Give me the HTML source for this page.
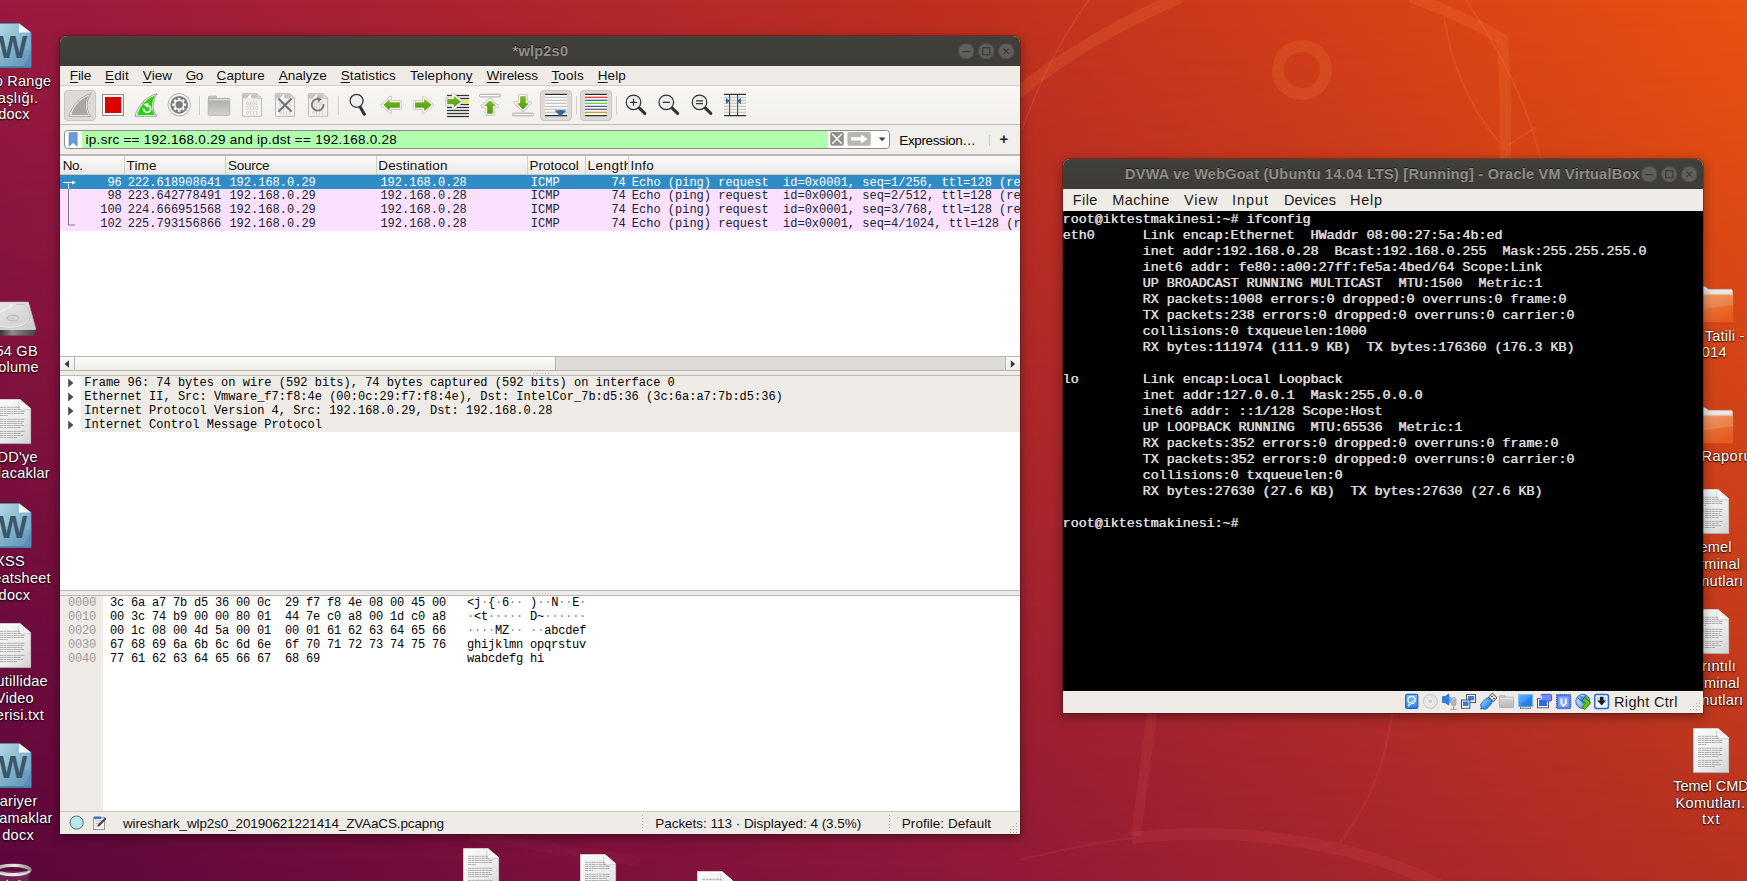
<!DOCTYPE html>
<html><head><meta charset="utf-8"><title>desktop</title>
<style>
html,body{margin:0;padding:0}
body{width:1747px;height:881px;overflow:hidden;position:relative;font-family:"Liberation Sans",sans-serif;font-size:13.5px;color:#000;background:#8c1a3a}
.t{position:absolute;white-space:pre;line-height:20px;height:20px}
.a{position:absolute}
.win{position:absolute;border-radius:7px 7px 0 0;box-shadow:0 0 0 1px rgba(40,20,20,.30),0 3px 11px 1px rgba(0,0,0,.36)}
.tb{position:absolute;left:0;top:0;right:0;height:30px;border-radius:7px 7px 0 0;background:linear-gradient(#45443f 0,#403f3a 2px,#3d3c38 100%)}
.wb{position:absolute;top:7px;width:16px;height:16px;border-radius:8px;background:#5f5e58}

.pr{font-family:"Liberation Mono",monospace;font-size:12px;line-height:14px;white-space:pre;overflow:hidden}
.c{position:absolute;top:0;height:14px;overflow:hidden;box-sizing:border-box;white-space:pre}
.bx .c{overflow:visible}
.bx i{font-style:normal;color:#8a8a8a}
u{text-decoration:underline;text-decoration-thickness:1px;text-underline-offset:1.5px}

.term{font-family:"Liberation Mono",monospace;font-size:13.333px;font-weight:400;color:#dadada;white-space:pre;text-shadow:.55px 0 0 #dadada}
.tl{height:16px;line-height:16px;position:relative;top:1px}
</style></head>
<body>
<svg class=a style="left:0;top:0" width="1747" height="881" viewBox="0 0 1747 881">
<defs>
<linearGradient id="gt" x1="0" y1="0" x2="1" y2="0"><stop offset="0" stop-color="#9a1a40"/><stop offset=".55" stop-color="#c0301f"/><stop offset="1" stop-color="#e95210"/></linearGradient>
<linearGradient id="gb" x1="0" y1="0" x2="1" y2="0"><stop offset="0" stop-color="#5b063c"/><stop offset=".5" stop-color="#8a153c"/><stop offset="1" stop-color="#b83220"/></linearGradient>
<linearGradient id="gm" x1="0" y1="0" x2="0" y2="1"><stop offset="0" stop-color="#000"/><stop offset="1" stop-color="#fff"/></linearGradient>
<mask id="mk"><rect width="1747" height="881" fill="url(#gm)"/></mask>
</defs>
<rect width="1747" height="881" fill="url(#gt)"/>
<rect width="1747" height="881" fill="url(#gb)" mask="url(#mk)"/>
<g fill="none" stroke="#ff8c4a" stroke-opacity=".16">
<circle cx="1302" cy="70" r="24" stroke-width="12"/>
<path d="M1018 93 C1060 58 1115 26 1180 -3" stroke-width="12"/>
<path d="M1022 130 C1040 80 1060 40 1090 -2" stroke-width="1.6"/>
<path d="M1507 146 L1536 127" stroke-width="2"/>
<path d="M1411 -3 C1445 10 1478 24 1502 39 C1506 80 1506 120 1505 160" stroke-width="11.5"/>
<path d="M1444 17 C1452 70 1472 110 1499 142" stroke-width="2"/>
<path d="M1465 -2 C1500 50 1528 105 1541 160" stroke-width="2"/>
</g><g fill="none" stroke="#ff6a70" stroke-opacity=".10">
<path d="M1132 838 C1230 826 1350 840 1440 885" stroke-width="12"/>
<path d="M1152 713 L1136 836" stroke-width="10"/>
<path d="M1392 713 C1385 770 1365 810 1340 842" stroke-width="2.5"/>
<path d="M1020 860 C1060 850 1100 842 1134 838" stroke-width="2"/>
<path d="M470 836 C520 845 580 850 640 862" stroke-width="10" stroke-opacity=".05"/>
</g>
</svg>
<div id="desk">
<svg width="0" height="0" style="position:absolute"><defs>
<linearGradient id="wpg" x1="0" y1="0" x2="1" y2="1"><stop offset="0" stop-color="#acd6e0"/><stop offset=".5" stop-color="#7fb2cb"/><stop offset="1" stop-color="#5f8fb8"/></linearGradient>
<linearGradient id="fold" x1="0" y1="1" x2="1" y2="0"><stop offset="0" stop-color="#fff"/><stop offset=".5" stop-color="#eee"/><stop offset="1" stop-color="#b9b9b9"/></linearGradient>
<linearGradient id="txg" x1="0" y1="0" x2="1" y2="1"><stop offset="0" stop-color="#fbfbfb"/><stop offset=".6" stop-color="#ececec"/><stop offset="1" stop-color="#d2d2d2"/></linearGradient>
<linearGradient id="fog" x1="0" y1="0" x2=".6" y2="1"><stop offset="0" stop-color="#ee9a5c"/><stop offset=".5" stop-color="#e9763a"/><stop offset="1" stop-color="#e65a20"/></linearGradient>
<linearGradient id="fbk" x1="0" y1="0" x2="0" y2="1"><stop offset="0" stop-color="#f6f6f6"/><stop offset="1" stop-color="#d4d4d4"/></linearGradient>
<linearGradient id="hdg" x1="0" y1="0" x2="1" y2="1"><stop offset="0" stop-color="#e9e9e9"/><stop offset="1" stop-color="#cdcdcd"/></linearGradient>
<linearGradient id="hdf" x1="0" y1="0" x2="1" y2="0"><stop offset="0" stop-color="#6a6a6a"/><stop offset=".22" stop-color="#2c2c2c"/><stop offset=".5" stop-color="#8c8c8c"/><stop offset="1" stop-color="#444"/></linearGradient>
<linearGradient id="trg" x1="0" y1="0" x2="1" y2="0"><stop offset="0" stop-color="#a4a6a0"/><stop offset=".55" stop-color="#e8e8e6"/><stop offset="1" stop-color="#8c8e88"/></linearGradient>
</defs></svg>
<svg class=a style="left:-4.5px;top:23px;" width="37" height="46" viewBox="0 0 37 46"><path d='M.5 .5H23L35 9.6V44.5H.5Z' fill='url(#wpg)' stroke='#4f8fae' stroke-width='1'/><path d='M1 44H35' stroke='#2f6f8c' stroke-width='1.2'/><path d='M34.5 44.5V31L27 44.5Z' fill='#5a86b9' opacity='.75'/><path d='M1 30L14 22L35 28V12L23 1H1Z' fill='#fff' opacity='.10'/><path d='M23 .5V9.6H35Z' fill='url(#fold)'/><text x='16.8' y='35.4' font-family='Liberation Sans, sans-serif' font-weight='700' font-size='30.5' text-anchor='middle' fill='#3c5666'>W</text></svg>
<svg class=a style="left:-4.5px;top:503px;" width="37" height="46" viewBox="0 0 37 46"><path d='M.5 .5H23L35 9.6V44.5H.5Z' fill='url(#wpg)' stroke='#4f8fae' stroke-width='1'/><path d='M1 44H35' stroke='#2f6f8c' stroke-width='1.2'/><path d='M34.5 44.5V31L27 44.5Z' fill='#5a86b9' opacity='.75'/><path d='M1 30L14 22L35 28V12L23 1H1Z' fill='#fff' opacity='.10'/><path d='M23 .5V9.6H35Z' fill='url(#fold)'/><text x='16.8' y='35.4' font-family='Liberation Sans, sans-serif' font-weight='700' font-size='30.5' text-anchor='middle' fill='#3c5666'>W</text></svg>
<svg class=a style="left:-4.5px;top:743px;" width="37" height="46" viewBox="0 0 37 46"><path d='M.5 .5H23L35 9.6V44.5H.5Z' fill='url(#wpg)' stroke='#4f8fae' stroke-width='1'/><path d='M1 44H35' stroke='#2f6f8c' stroke-width='1.2'/><path d='M34.5 44.5V31L27 44.5Z' fill='#5a86b9' opacity='.75'/><path d='M1 30L14 22L35 28V12L23 1H1Z' fill='#fff' opacity='.10'/><path d='M23 .5V9.6H35Z' fill='url(#fold)'/><text x='16.8' y='35.4' font-family='Liberation Sans, sans-serif' font-weight='700' font-size='30.5' text-anchor='middle' fill='#3c5666'>W</text></svg>
<svg class=a style="left:-4.8px;top:398.5px;" width="37" height="46" viewBox="0 0 37 46"><path d='M.5 .5H25L35.6 9.6V44.5H.5Z' fill='url(#txg)' stroke='#c9c9c9' stroke-width='.9'/><path d='M1.3 44V1.3H24.5' stroke='#fff' stroke-opacity='.9' stroke-width='.8' fill='none'/><path d='M.5 44.6H35.6' stroke='#a5a5a5' stroke-width='.9'/><path d='M5 8.3H25' stroke='#8c8c8c' stroke-opacity='.8' stroke-width='.85' stroke-dasharray='3.2 .5 2.6 .5 4 .5 1.8 .5'/><path d='M5 10.4H26' stroke='#8c8c8c' stroke-opacity='.8' stroke-width='.85' stroke-dasharray='3.2 .5 2.6 .5 4 .5 1.8 .5'/><path d='M5 12.4H30' stroke='#8c8c8c' stroke-opacity='.8' stroke-width='.85' stroke-dasharray='3.2 .5 2.6 .5 4 .5 1.8 .5'/><path d='M5 14.5H29' stroke='#8c8c8c' stroke-opacity='.8' stroke-width='.85' stroke-dasharray='3.2 .5 2.6 .5 4 .5 1.8 .5'/><path d='M5 16.5H13' stroke='#8c8c8c' stroke-opacity='.8' stroke-width='.85' stroke-dasharray='3.2 .5 2.6 .5 4 .5 1.8 .5'/><path d='M5 20.3H30' stroke='#8c8c8c' stroke-opacity='.8' stroke-width='.85' stroke-dasharray='3.2 .5 2.6 .5 4 .5 1.8 .5'/><path d='M5 22.4H29' stroke='#8c8c8c' stroke-opacity='.8' stroke-width='.85' stroke-dasharray='3.2 .5 2.6 .5 4 .5 1.8 .5'/><path d='M5 24.5H27' stroke='#8c8c8c' stroke-opacity='.8' stroke-width='.85' stroke-dasharray='3.2 .5 2.6 .5 4 .5 1.8 .5'/><path d='M5 26.5H29' stroke='#8c8c8c' stroke-opacity='.8' stroke-width='.85' stroke-dasharray='3.2 .5 2.6 .5 4 .5 1.8 .5'/><path d='M5 28.6H26' stroke='#8c8c8c' stroke-opacity='.8' stroke-width='.85' stroke-dasharray='3.2 .5 2.6 .5 4 .5 1.8 .5'/><path d='M5 32.4H30' stroke='#8c8c8c' stroke-opacity='.8' stroke-width='.85' stroke-dasharray='3.2 .5 2.6 .5 4 .5 1.8 .5'/><path d='M5 34.4H26' stroke='#8c8c8c' stroke-opacity='.8' stroke-width='.85' stroke-dasharray='3.2 .5 2.6 .5 4 .5 1.8 .5'/><path d='M5 36.5H28' stroke='#8c8c8c' stroke-opacity='.8' stroke-width='.85' stroke-dasharray='3.2 .5 2.6 .5 4 .5 1.8 .5'/><path d='M5 38.5H22' stroke='#8c8c8c' stroke-opacity='.8' stroke-width='.85' stroke-dasharray='3.2 .5 2.6 .5 4 .5 1.8 .5'/><path d='M25 .5V6Q25 9.6 28.5 9.6H35.6Z' fill='url(#fold)'/><path d='M23.6 2.5V9Q24 10.6 26 10.8L35 10.6' stroke='#000' stroke-opacity='.10' stroke-width='1.2' fill='none'/></svg>
<svg class=a style="left:-4.8px;top:623px;" width="37" height="46" viewBox="0 0 37 46"><path d='M.5 .5H25L35.6 9.6V44.5H.5Z' fill='url(#txg)' stroke='#c9c9c9' stroke-width='.9'/><path d='M1.3 44V1.3H24.5' stroke='#fff' stroke-opacity='.9' stroke-width='.8' fill='none'/><path d='M.5 44.6H35.6' stroke='#a5a5a5' stroke-width='.9'/><path d='M5 8.3H25' stroke='#8c8c8c' stroke-opacity='.8' stroke-width='.85' stroke-dasharray='3.2 .5 2.6 .5 4 .5 1.8 .5'/><path d='M5 10.4H26' stroke='#8c8c8c' stroke-opacity='.8' stroke-width='.85' stroke-dasharray='3.2 .5 2.6 .5 4 .5 1.8 .5'/><path d='M5 12.4H30' stroke='#8c8c8c' stroke-opacity='.8' stroke-width='.85' stroke-dasharray='3.2 .5 2.6 .5 4 .5 1.8 .5'/><path d='M5 14.5H29' stroke='#8c8c8c' stroke-opacity='.8' stroke-width='.85' stroke-dasharray='3.2 .5 2.6 .5 4 .5 1.8 .5'/><path d='M5 16.5H13' stroke='#8c8c8c' stroke-opacity='.8' stroke-width='.85' stroke-dasharray='3.2 .5 2.6 .5 4 .5 1.8 .5'/><path d='M5 20.3H30' stroke='#8c8c8c' stroke-opacity='.8' stroke-width='.85' stroke-dasharray='3.2 .5 2.6 .5 4 .5 1.8 .5'/><path d='M5 22.4H29' stroke='#8c8c8c' stroke-opacity='.8' stroke-width='.85' stroke-dasharray='3.2 .5 2.6 .5 4 .5 1.8 .5'/><path d='M5 24.5H27' stroke='#8c8c8c' stroke-opacity='.8' stroke-width='.85' stroke-dasharray='3.2 .5 2.6 .5 4 .5 1.8 .5'/><path d='M5 26.5H29' stroke='#8c8c8c' stroke-opacity='.8' stroke-width='.85' stroke-dasharray='3.2 .5 2.6 .5 4 .5 1.8 .5'/><path d='M5 28.6H26' stroke='#8c8c8c' stroke-opacity='.8' stroke-width='.85' stroke-dasharray='3.2 .5 2.6 .5 4 .5 1.8 .5'/><path d='M5 32.4H30' stroke='#8c8c8c' stroke-opacity='.8' stroke-width='.85' stroke-dasharray='3.2 .5 2.6 .5 4 .5 1.8 .5'/><path d='M5 34.4H26' stroke='#8c8c8c' stroke-opacity='.8' stroke-width='.85' stroke-dasharray='3.2 .5 2.6 .5 4 .5 1.8 .5'/><path d='M5 36.5H28' stroke='#8c8c8c' stroke-opacity='.8' stroke-width='.85' stroke-dasharray='3.2 .5 2.6 .5 4 .5 1.8 .5'/><path d='M5 38.5H22' stroke='#8c8c8c' stroke-opacity='.8' stroke-width='.85' stroke-dasharray='3.2 .5 2.6 .5 4 .5 1.8 .5'/><path d='M25 .5V6Q25 9.6 28.5 9.6H35.6Z' fill='url(#fold)'/><path d='M23.6 2.5V9Q24 10.6 26 10.8L35 10.6' stroke='#000' stroke-opacity='.10' stroke-width='1.2' fill='none'/></svg>
<svg class=a style="left:-12px;top:300px;" width="50" height="38" viewBox="0 0 50 38"><path d='M.2 29L7.6 2.1H40.4L47.8 29Z' fill='url(#hdg)' stroke='#bdbdbd' stroke-width='.7'/><path d='M.2 29H47.8L46.9 35.6H1.1Z' fill='url(#hdf)'/><path d='M.4 29.2H47.6' stroke='#f2f2f2' stroke-width='1.1'/><path d='M28 4.5H36.5C41 9 43.5 14 41.5 19C38.5 25.5 30 28 22 28C14 28 6 26 3 22' fill='none' stroke='#bcbcbc' stroke-width='.8'/><path d='M3.5 21.4C8 26 16 27.2 22 27.2C30 27.2 37.5 25 40.6 19' fill='none' stroke='#f4f4f4' stroke-width='.9'/><ellipse cx='25' cy='18' rx='6' ry='2.8' fill='#d4d4d4' stroke='#a9a9a9' stroke-width='.7'/><path d='M8 14L24 5.5' stroke='#eeeeee' stroke-width='2' stroke-linecap='round'/></svg>
<svg class=a style="left:-6px;top:862px;" width="40" height="20" viewBox="0 0 40 20"><path d='M2.5 9L4 20H34L35.6 9Z' fill='#fff' fill-opacity='.12'/><ellipse cx='19' cy='8' rx='17' ry='4.6' fill='none' stroke='url(#trg)' stroke-width='3.4'/><path d='M2 9.4Q19 17.5 36 9.4' fill='none' stroke='#f2f2f2' stroke-opacity='.8' stroke-width='1.2'/><path d='M11 20L13.5 17.6L15 20ZM23.5 20L24.5 18L29 19.4V20Z' fill='#fff' fill-opacity='.85'/></svg>
<svg class=a style="left:1686px;top:286px;" width="48" height="38" viewBox="0 0 48 38"><path d='M1 3Q1 .6 3 .6H17.5Q19 .6 20 1.6L22.5 3.4H45Q46.4 3.4 46.4 5V12H1Z' fill='url(#fbk)' stroke='#cfcfcf' stroke-width='.6'/><rect x='.6' y='8' width='46.6' height='28.6' rx='1.6' fill='url(#fog)'/><path d='M.6 9.6Q.6 8 2.2 8H45.6Q47.2 8 47.2 9.6V19C30 21 14 24 .6 27Z' fill='#fff' fill-opacity='.13'/><path d='M1 8.6H46.8' stroke='#f7c09a' stroke-width='.9'/><path d='M1.5 36.9H46.4' stroke='#b8431a' stroke-opacity='.6' stroke-width='.9'/></svg>
<svg class=a style="left:1686px;top:407px;" width="48" height="38" viewBox="0 0 48 38"><path d='M1 3Q1 .6 3 .6H17.5Q19 .6 20 1.6L22.5 3.4H45Q46.4 3.4 46.4 5V12H1Z' fill='url(#fbk)' stroke='#cfcfcf' stroke-width='.6'/><rect x='.6' y='8' width='46.6' height='28.6' rx='1.6' fill='url(#fog)'/><path d='M.6 9.6Q.6 8 2.2 8H45.6Q47.2 8 47.2 9.6V19C30 21 14 24 .6 27Z' fill='#fff' fill-opacity='.13'/><path d='M1 8.6H46.8' stroke='#f7c09a' stroke-width='.9'/><path d='M1.5 36.9H46.4' stroke='#b8431a' stroke-opacity='.6' stroke-width='.9'/></svg>
<svg class=a style="left:1692.5px;top:489px;" width="37" height="46" viewBox="0 0 37 46"><path d='M.5 .5H25L35.6 9.6V44.5H.5Z' fill='url(#txg)' stroke='#c9c9c9' stroke-width='.9'/><path d='M1.3 44V1.3H24.5' stroke='#fff' stroke-opacity='.9' stroke-width='.8' fill='none'/><path d='M.5 44.6H35.6' stroke='#a5a5a5' stroke-width='.9'/><path d='M5 8.3H25' stroke='#8c8c8c' stroke-opacity='.8' stroke-width='.85' stroke-dasharray='3.2 .5 2.6 .5 4 .5 1.8 .5'/><path d='M5 10.4H26' stroke='#8c8c8c' stroke-opacity='.8' stroke-width='.85' stroke-dasharray='3.2 .5 2.6 .5 4 .5 1.8 .5'/><path d='M5 12.4H30' stroke='#8c8c8c' stroke-opacity='.8' stroke-width='.85' stroke-dasharray='3.2 .5 2.6 .5 4 .5 1.8 .5'/><path d='M5 14.5H29' stroke='#8c8c8c' stroke-opacity='.8' stroke-width='.85' stroke-dasharray='3.2 .5 2.6 .5 4 .5 1.8 .5'/><path d='M5 16.5H13' stroke='#8c8c8c' stroke-opacity='.8' stroke-width='.85' stroke-dasharray='3.2 .5 2.6 .5 4 .5 1.8 .5'/><path d='M5 20.3H30' stroke='#8c8c8c' stroke-opacity='.8' stroke-width='.85' stroke-dasharray='3.2 .5 2.6 .5 4 .5 1.8 .5'/><path d='M5 22.4H29' stroke='#8c8c8c' stroke-opacity='.8' stroke-width='.85' stroke-dasharray='3.2 .5 2.6 .5 4 .5 1.8 .5'/><path d='M5 24.5H27' stroke='#8c8c8c' stroke-opacity='.8' stroke-width='.85' stroke-dasharray='3.2 .5 2.6 .5 4 .5 1.8 .5'/><path d='M5 26.5H29' stroke='#8c8c8c' stroke-opacity='.8' stroke-width='.85' stroke-dasharray='3.2 .5 2.6 .5 4 .5 1.8 .5'/><path d='M5 28.6H26' stroke='#8c8c8c' stroke-opacity='.8' stroke-width='.85' stroke-dasharray='3.2 .5 2.6 .5 4 .5 1.8 .5'/><path d='M5 32.4H30' stroke='#8c8c8c' stroke-opacity='.8' stroke-width='.85' stroke-dasharray='3.2 .5 2.6 .5 4 .5 1.8 .5'/><path d='M5 34.4H26' stroke='#8c8c8c' stroke-opacity='.8' stroke-width='.85' stroke-dasharray='3.2 .5 2.6 .5 4 .5 1.8 .5'/><path d='M5 36.5H28' stroke='#8c8c8c' stroke-opacity='.8' stroke-width='.85' stroke-dasharray='3.2 .5 2.6 .5 4 .5 1.8 .5'/><path d='M5 38.5H22' stroke='#8c8c8c' stroke-opacity='.8' stroke-width='.85' stroke-dasharray='3.2 .5 2.6 .5 4 .5 1.8 .5'/><path d='M25 .5V6Q25 9.6 28.5 9.6H35.6Z' fill='url(#fold)'/><path d='M23.6 2.5V9Q24 10.6 26 10.8L35 10.6' stroke='#000' stroke-opacity='.10' stroke-width='1.2' fill='none'/></svg>
<svg class=a style="left:1692.5px;top:608.5px;" width="37" height="46" viewBox="0 0 37 46"><path d='M.5 .5H25L35.6 9.6V44.5H.5Z' fill='url(#txg)' stroke='#c9c9c9' stroke-width='.9'/><path d='M1.3 44V1.3H24.5' stroke='#fff' stroke-opacity='.9' stroke-width='.8' fill='none'/><path d='M.5 44.6H35.6' stroke='#a5a5a5' stroke-width='.9'/><path d='M5 8.3H25' stroke='#8c8c8c' stroke-opacity='.8' stroke-width='.85' stroke-dasharray='3.2 .5 2.6 .5 4 .5 1.8 .5'/><path d='M5 10.4H26' stroke='#8c8c8c' stroke-opacity='.8' stroke-width='.85' stroke-dasharray='3.2 .5 2.6 .5 4 .5 1.8 .5'/><path d='M5 12.4H30' stroke='#8c8c8c' stroke-opacity='.8' stroke-width='.85' stroke-dasharray='3.2 .5 2.6 .5 4 .5 1.8 .5'/><path d='M5 14.5H29' stroke='#8c8c8c' stroke-opacity='.8' stroke-width='.85' stroke-dasharray='3.2 .5 2.6 .5 4 .5 1.8 .5'/><path d='M5 16.5H13' stroke='#8c8c8c' stroke-opacity='.8' stroke-width='.85' stroke-dasharray='3.2 .5 2.6 .5 4 .5 1.8 .5'/><path d='M5 20.3H30' stroke='#8c8c8c' stroke-opacity='.8' stroke-width='.85' stroke-dasharray='3.2 .5 2.6 .5 4 .5 1.8 .5'/><path d='M5 22.4H29' stroke='#8c8c8c' stroke-opacity='.8' stroke-width='.85' stroke-dasharray='3.2 .5 2.6 .5 4 .5 1.8 .5'/><path d='M5 24.5H27' stroke='#8c8c8c' stroke-opacity='.8' stroke-width='.85' stroke-dasharray='3.2 .5 2.6 .5 4 .5 1.8 .5'/><path d='M5 26.5H29' stroke='#8c8c8c' stroke-opacity='.8' stroke-width='.85' stroke-dasharray='3.2 .5 2.6 .5 4 .5 1.8 .5'/><path d='M5 28.6H26' stroke='#8c8c8c' stroke-opacity='.8' stroke-width='.85' stroke-dasharray='3.2 .5 2.6 .5 4 .5 1.8 .5'/><path d='M5 32.4H30' stroke='#8c8c8c' stroke-opacity='.8' stroke-width='.85' stroke-dasharray='3.2 .5 2.6 .5 4 .5 1.8 .5'/><path d='M5 34.4H26' stroke='#8c8c8c' stroke-opacity='.8' stroke-width='.85' stroke-dasharray='3.2 .5 2.6 .5 4 .5 1.8 .5'/><path d='M5 36.5H28' stroke='#8c8c8c' stroke-opacity='.8' stroke-width='.85' stroke-dasharray='3.2 .5 2.6 .5 4 .5 1.8 .5'/><path d='M5 38.5H22' stroke='#8c8c8c' stroke-opacity='.8' stroke-width='.85' stroke-dasharray='3.2 .5 2.6 .5 4 .5 1.8 .5'/><path d='M25 .5V6Q25 9.6 28.5 9.6H35.6Z' fill='url(#fold)'/><path d='M23.6 2.5V9Q24 10.6 26 10.8L35 10.6' stroke='#000' stroke-opacity='.10' stroke-width='1.2' fill='none'/></svg>
<svg class=a style="left:1692.5px;top:728px;" width="37" height="46" viewBox="0 0 37 46"><path d='M.5 .5H25L35.6 9.6V44.5H.5Z' fill='url(#txg)' stroke='#c9c9c9' stroke-width='.9'/><path d='M1.3 44V1.3H24.5' stroke='#fff' stroke-opacity='.9' stroke-width='.8' fill='none'/><path d='M.5 44.6H35.6' stroke='#a5a5a5' stroke-width='.9'/><path d='M5 8.3H25' stroke='#8c8c8c' stroke-opacity='.8' stroke-width='.85' stroke-dasharray='3.2 .5 2.6 .5 4 .5 1.8 .5'/><path d='M5 10.4H26' stroke='#8c8c8c' stroke-opacity='.8' stroke-width='.85' stroke-dasharray='3.2 .5 2.6 .5 4 .5 1.8 .5'/><path d='M5 12.4H30' stroke='#8c8c8c' stroke-opacity='.8' stroke-width='.85' stroke-dasharray='3.2 .5 2.6 .5 4 .5 1.8 .5'/><path d='M5 14.5H29' stroke='#8c8c8c' stroke-opacity='.8' stroke-width='.85' stroke-dasharray='3.2 .5 2.6 .5 4 .5 1.8 .5'/><path d='M5 16.5H13' stroke='#8c8c8c' stroke-opacity='.8' stroke-width='.85' stroke-dasharray='3.2 .5 2.6 .5 4 .5 1.8 .5'/><path d='M5 20.3H30' stroke='#8c8c8c' stroke-opacity='.8' stroke-width='.85' stroke-dasharray='3.2 .5 2.6 .5 4 .5 1.8 .5'/><path d='M5 22.4H29' stroke='#8c8c8c' stroke-opacity='.8' stroke-width='.85' stroke-dasharray='3.2 .5 2.6 .5 4 .5 1.8 .5'/><path d='M5 24.5H27' stroke='#8c8c8c' stroke-opacity='.8' stroke-width='.85' stroke-dasharray='3.2 .5 2.6 .5 4 .5 1.8 .5'/><path d='M5 26.5H29' stroke='#8c8c8c' stroke-opacity='.8' stroke-width='.85' stroke-dasharray='3.2 .5 2.6 .5 4 .5 1.8 .5'/><path d='M5 28.6H26' stroke='#8c8c8c' stroke-opacity='.8' stroke-width='.85' stroke-dasharray='3.2 .5 2.6 .5 4 .5 1.8 .5'/><path d='M5 32.4H30' stroke='#8c8c8c' stroke-opacity='.8' stroke-width='.85' stroke-dasharray='3.2 .5 2.6 .5 4 .5 1.8 .5'/><path d='M5 34.4H26' stroke='#8c8c8c' stroke-opacity='.8' stroke-width='.85' stroke-dasharray='3.2 .5 2.6 .5 4 .5 1.8 .5'/><path d='M5 36.5H28' stroke='#8c8c8c' stroke-opacity='.8' stroke-width='.85' stroke-dasharray='3.2 .5 2.6 .5 4 .5 1.8 .5'/><path d='M5 38.5H22' stroke='#8c8c8c' stroke-opacity='.8' stroke-width='.85' stroke-dasharray='3.2 .5 2.6 .5 4 .5 1.8 .5'/><path d='M25 .5V6Q25 9.6 28.5 9.6H35.6Z' fill='url(#fold)'/><path d='M23.6 2.5V9Q24 10.6 26 10.8L35 10.6' stroke='#000' stroke-opacity='.10' stroke-width='1.2' fill='none'/></svg>
<svg class=a style="left:463px;top:848px;" width="37" height="46" viewBox="0 0 37 46"><path d='M.5 .5H25L35.6 9.6V44.5H.5Z' fill='url(#txg)' stroke='#c9c9c9' stroke-width='.9'/><path d='M1.3 44V1.3H24.5' stroke='#fff' stroke-opacity='.9' stroke-width='.8' fill='none'/><path d='M.5 44.6H35.6' stroke='#a5a5a5' stroke-width='.9'/><path d='M5 8.3H25' stroke='#8c8c8c' stroke-opacity='.8' stroke-width='.85' stroke-dasharray='3.2 .5 2.6 .5 4 .5 1.8 .5'/><path d='M5 10.4H26' stroke='#8c8c8c' stroke-opacity='.8' stroke-width='.85' stroke-dasharray='3.2 .5 2.6 .5 4 .5 1.8 .5'/><path d='M5 12.4H30' stroke='#8c8c8c' stroke-opacity='.8' stroke-width='.85' stroke-dasharray='3.2 .5 2.6 .5 4 .5 1.8 .5'/><path d='M5 14.5H29' stroke='#8c8c8c' stroke-opacity='.8' stroke-width='.85' stroke-dasharray='3.2 .5 2.6 .5 4 .5 1.8 .5'/><path d='M5 16.5H13' stroke='#8c8c8c' stroke-opacity='.8' stroke-width='.85' stroke-dasharray='3.2 .5 2.6 .5 4 .5 1.8 .5'/><path d='M5 20.3H30' stroke='#8c8c8c' stroke-opacity='.8' stroke-width='.85' stroke-dasharray='3.2 .5 2.6 .5 4 .5 1.8 .5'/><path d='M5 22.4H29' stroke='#8c8c8c' stroke-opacity='.8' stroke-width='.85' stroke-dasharray='3.2 .5 2.6 .5 4 .5 1.8 .5'/><path d='M5 24.5H27' stroke='#8c8c8c' stroke-opacity='.8' stroke-width='.85' stroke-dasharray='3.2 .5 2.6 .5 4 .5 1.8 .5'/><path d='M5 26.5H29' stroke='#8c8c8c' stroke-opacity='.8' stroke-width='.85' stroke-dasharray='3.2 .5 2.6 .5 4 .5 1.8 .5'/><path d='M5 28.6H26' stroke='#8c8c8c' stroke-opacity='.8' stroke-width='.85' stroke-dasharray='3.2 .5 2.6 .5 4 .5 1.8 .5'/><path d='M5 32.4H30' stroke='#8c8c8c' stroke-opacity='.8' stroke-width='.85' stroke-dasharray='3.2 .5 2.6 .5 4 .5 1.8 .5'/><path d='M5 34.4H26' stroke='#8c8c8c' stroke-opacity='.8' stroke-width='.85' stroke-dasharray='3.2 .5 2.6 .5 4 .5 1.8 .5'/><path d='M5 36.5H28' stroke='#8c8c8c' stroke-opacity='.8' stroke-width='.85' stroke-dasharray='3.2 .5 2.6 .5 4 .5 1.8 .5'/><path d='M5 38.5H22' stroke='#8c8c8c' stroke-opacity='.8' stroke-width='.85' stroke-dasharray='3.2 .5 2.6 .5 4 .5 1.8 .5'/><path d='M25 .5V6Q25 9.6 28.5 9.6H35.6Z' fill='url(#fold)'/><path d='M23.6 2.5V9Q24 10.6 26 10.8L35 10.6' stroke='#000' stroke-opacity='.10' stroke-width='1.2' fill='none'/></svg>
<svg class=a style="left:580px;top:854px;" width="37" height="46" viewBox="0 0 37 46"><path d='M.5 .5H25L35.6 9.6V44.5H.5Z' fill='url(#txg)' stroke='#c9c9c9' stroke-width='.9'/><path d='M1.3 44V1.3H24.5' stroke='#fff' stroke-opacity='.9' stroke-width='.8' fill='none'/><path d='M.5 44.6H35.6' stroke='#a5a5a5' stroke-width='.9'/><path d='M5 8.3H25' stroke='#8c8c8c' stroke-opacity='.8' stroke-width='.85' stroke-dasharray='3.2 .5 2.6 .5 4 .5 1.8 .5'/><path d='M5 10.4H26' stroke='#8c8c8c' stroke-opacity='.8' stroke-width='.85' stroke-dasharray='3.2 .5 2.6 .5 4 .5 1.8 .5'/><path d='M5 12.4H30' stroke='#8c8c8c' stroke-opacity='.8' stroke-width='.85' stroke-dasharray='3.2 .5 2.6 .5 4 .5 1.8 .5'/><path d='M5 14.5H29' stroke='#8c8c8c' stroke-opacity='.8' stroke-width='.85' stroke-dasharray='3.2 .5 2.6 .5 4 .5 1.8 .5'/><path d='M5 16.5H13' stroke='#8c8c8c' stroke-opacity='.8' stroke-width='.85' stroke-dasharray='3.2 .5 2.6 .5 4 .5 1.8 .5'/><path d='M5 20.3H30' stroke='#8c8c8c' stroke-opacity='.8' stroke-width='.85' stroke-dasharray='3.2 .5 2.6 .5 4 .5 1.8 .5'/><path d='M5 22.4H29' stroke='#8c8c8c' stroke-opacity='.8' stroke-width='.85' stroke-dasharray='3.2 .5 2.6 .5 4 .5 1.8 .5'/><path d='M5 24.5H27' stroke='#8c8c8c' stroke-opacity='.8' stroke-width='.85' stroke-dasharray='3.2 .5 2.6 .5 4 .5 1.8 .5'/><path d='M5 26.5H29' stroke='#8c8c8c' stroke-opacity='.8' stroke-width='.85' stroke-dasharray='3.2 .5 2.6 .5 4 .5 1.8 .5'/><path d='M5 28.6H26' stroke='#8c8c8c' stroke-opacity='.8' stroke-width='.85' stroke-dasharray='3.2 .5 2.6 .5 4 .5 1.8 .5'/><path d='M5 32.4H30' stroke='#8c8c8c' stroke-opacity='.8' stroke-width='.85' stroke-dasharray='3.2 .5 2.6 .5 4 .5 1.8 .5'/><path d='M5 34.4H26' stroke='#8c8c8c' stroke-opacity='.8' stroke-width='.85' stroke-dasharray='3.2 .5 2.6 .5 4 .5 1.8 .5'/><path d='M5 36.5H28' stroke='#8c8c8c' stroke-opacity='.8' stroke-width='.85' stroke-dasharray='3.2 .5 2.6 .5 4 .5 1.8 .5'/><path d='M5 38.5H22' stroke='#8c8c8c' stroke-opacity='.8' stroke-width='.85' stroke-dasharray='3.2 .5 2.6 .5 4 .5 1.8 .5'/><path d='M25 .5V6Q25 9.6 28.5 9.6H35.6Z' fill='url(#fold)'/><path d='M23.6 2.5V9Q24 10.6 26 10.8L35 10.6' stroke='#000' stroke-opacity='.10' stroke-width='1.2' fill='none'/></svg>
<svg class=a style="left:697px;top:871px;" width="37" height="46" viewBox="0 0 37 46"><path d='M.5 .5H25L35.6 9.6V44.5H.5Z' fill='url(#txg)' stroke='#c9c9c9' stroke-width='.9'/><path d='M1.3 44V1.3H24.5' stroke='#fff' stroke-opacity='.9' stroke-width='.8' fill='none'/><path d='M.5 44.6H35.6' stroke='#a5a5a5' stroke-width='.9'/><path d='M5 8.3H25' stroke='#8c8c8c' stroke-opacity='.8' stroke-width='.85' stroke-dasharray='3.2 .5 2.6 .5 4 .5 1.8 .5'/><path d='M5 10.4H26' stroke='#8c8c8c' stroke-opacity='.8' stroke-width='.85' stroke-dasharray='3.2 .5 2.6 .5 4 .5 1.8 .5'/><path d='M5 12.4H30' stroke='#8c8c8c' stroke-opacity='.8' stroke-width='.85' stroke-dasharray='3.2 .5 2.6 .5 4 .5 1.8 .5'/><path d='M5 14.5H29' stroke='#8c8c8c' stroke-opacity='.8' stroke-width='.85' stroke-dasharray='3.2 .5 2.6 .5 4 .5 1.8 .5'/><path d='M5 16.5H13' stroke='#8c8c8c' stroke-opacity='.8' stroke-width='.85' stroke-dasharray='3.2 .5 2.6 .5 4 .5 1.8 .5'/><path d='M5 20.3H30' stroke='#8c8c8c' stroke-opacity='.8' stroke-width='.85' stroke-dasharray='3.2 .5 2.6 .5 4 .5 1.8 .5'/><path d='M5 22.4H29' stroke='#8c8c8c' stroke-opacity='.8' stroke-width='.85' stroke-dasharray='3.2 .5 2.6 .5 4 .5 1.8 .5'/><path d='M5 24.5H27' stroke='#8c8c8c' stroke-opacity='.8' stroke-width='.85' stroke-dasharray='3.2 .5 2.6 .5 4 .5 1.8 .5'/><path d='M5 26.5H29' stroke='#8c8c8c' stroke-opacity='.8' stroke-width='.85' stroke-dasharray='3.2 .5 2.6 .5 4 .5 1.8 .5'/><path d='M5 28.6H26' stroke='#8c8c8c' stroke-opacity='.8' stroke-width='.85' stroke-dasharray='3.2 .5 2.6 .5 4 .5 1.8 .5'/><path d='M5 32.4H30' stroke='#8c8c8c' stroke-opacity='.8' stroke-width='.85' stroke-dasharray='3.2 .5 2.6 .5 4 .5 1.8 .5'/><path d='M5 34.4H26' stroke='#8c8c8c' stroke-opacity='.8' stroke-width='.85' stroke-dasharray='3.2 .5 2.6 .5 4 .5 1.8 .5'/><path d='M5 36.5H28' stroke='#8c8c8c' stroke-opacity='.8' stroke-width='.85' stroke-dasharray='3.2 .5 2.6 .5 4 .5 1.8 .5'/><path d='M5 38.5H22' stroke='#8c8c8c' stroke-opacity='.8' stroke-width='.85' stroke-dasharray='3.2 .5 2.6 .5 4 .5 1.8 .5'/><path d='M25 .5V6Q25 9.6 28.5 9.6H35.6Z' fill='url(#fold)'/><path d='M23.6 2.5V9Q24 10.6 26 10.8L35 10.6' stroke='#000' stroke-opacity='.10' stroke-width='1.2' fill='none'/></svg>
<span class=t style="left:0.0px;top:71px;font-size:14.5px;letter-spacing:0.250px;color:#fff;left:auto;right:1695.7px;text-shadow:0 1px 1.5px rgba(0,0,0,.95),0 0 2px rgba(0,0,0,.6);">Nmap Range</span>
<span class=t style="left:0.0px;top:88px;font-size:14.5px;letter-spacing:0.250px;color:#fff;left:auto;right:1708.7px;text-shadow:0 1px 1.5px rgba(0,0,0,.95),0 0 2px rgba(0,0,0,.6);">Başlığı.</span>
<span class=t style="left:0.0px;top:104px;font-size:14.5px;letter-spacing:0.250px;color:#fff;left:auto;right:1717.2px;text-shadow:0 1px 1.5px rgba(0,0,0,.95),0 0 2px rgba(0,0,0,.6);">docx</span>
<span class=t style="left:0.0px;top:341px;font-size:14.5px;letter-spacing:0.250px;color:#fff;left:auto;right:1709.2px;text-shadow:0 1px 1.5px rgba(0,0,0,.95),0 0 2px rgba(0,0,0,.6);">254 GB</span>
<span class=t style="left:0.0px;top:357px;font-size:14.5px;letter-spacing:0.250px;color:#fff;left:auto;right:1708.1px;text-shadow:0 1px 1.5px rgba(0,0,0,.95),0 0 2px rgba(0,0,0,.6);">Volume</span>
<span class=t style="left:0.0px;top:447px;font-size:14.5px;letter-spacing:0.250px;color:#fff;left:auto;right:1709.2px;text-shadow:0 1px 1.5px rgba(0,0,0,.95),0 0 2px rgba(0,0,0,.6);">BDD'ye</span>
<span class=t style="left:0.0px;top:463px;font-size:14.5px;letter-spacing:0.250px;color:#fff;left:auto;right:1697.2px;text-shadow:0 1px 1.5px rgba(0,0,0,.95),0 0 2px rgba(0,0,0,.6);">Alacaklar</span>
<span class=t style="left:0.0px;top:551px;font-size:14.5px;letter-spacing:0.250px;color:#fff;left:auto;right:1722.2px;text-shadow:0 1px 1.5px rgba(0,0,0,.95),0 0 2px rgba(0,0,0,.6);">XSS</span>
<span class=t style="left:0.0px;top:568px;font-size:14.5px;letter-spacing:0.250px;color:#fff;left:auto;right:1696.2px;text-shadow:0 1px 1.5px rgba(0,0,0,.95),0 0 2px rgba(0,0,0,.6);">Cheatsheet</span>
<span class=t style="left:0.0px;top:585px;font-size:14.5px;letter-spacing:0.250px;color:#fff;left:auto;right:1716.8px;text-shadow:0 1px 1.5px rgba(0,0,0,.95),0 0 2px rgba(0,0,0,.6);">docx</span>
<span class=t style="left:0.0px;top:671px;font-size:14.5px;letter-spacing:0.250px;color:#fff;left:auto;right:1699.1px;text-shadow:0 1px 1.5px rgba(0,0,0,.95),0 0 2px rgba(0,0,0,.6);">Mutillidae</span>
<span class=t style="left:0.0px;top:688px;font-size:14.5px;letter-spacing:0.250px;color:#fff;left:auto;right:1713.1px;text-shadow:0 1px 1.5px rgba(0,0,0,.95),0 0 2px rgba(0,0,0,.6);">Video</span>
<span class=t style="left:0.0px;top:705px;font-size:14.5px;letter-spacing:0.250px;color:#fff;left:auto;right:1703.0px;text-shadow:0 1px 1.5px rgba(0,0,0,.95),0 0 2px rgba(0,0,0,.6);">Serisi.txt</span>
<span class=t style="left:0.0px;top:791px;font-size:14.5px;letter-spacing:0.250px;color:#fff;left:auto;right:1709.5px;text-shadow:0 1px 1.5px rgba(0,0,0,.95),0 0 2px rgba(0,0,0,.6);">Kariyer</span>
<span class=t style="left:0.0px;top:808px;font-size:14.5px;letter-spacing:0.250px;color:#fff;left:auto;right:1694.4px;text-shadow:0 1px 1.5px rgba(0,0,0,.95),0 0 2px rgba(0,0,0,.6);">Basamaklar</span>
<span class=t style="left:0.0px;top:825px;font-size:14.5px;letter-spacing:0.250px;color:#fff;left:auto;right:1713.1px;text-shadow:0 1px 1.5px rgba(0,0,0,.95),0 0 2px rgba(0,0,0,.6);">docx</span>
<span class=t style="left:0.0px;top:326px;font-size:14.5px;letter-spacing:0.250px;color:#fff;left:auto;right:2.5px;text-shadow:0 1px 1.5px rgba(0,0,0,.95),0 0 2px rgba(0,0,0,.6);">Yaz Tatili -</span>
<span class=t style="left:0.0px;top:342px;font-size:14.5px;letter-spacing:0.250px;color:#fff;left:auto;right:20.2px;text-shadow:0 1px 1.5px rgba(0,0,0,.95),0 0 2px rgba(0,0,0,.6);">2014</span>
<span class=t style="left:1701.5px;top:446px;font-size:14.5px;letter-spacing:0.500px;color:#fff;text-shadow:0 1px 1.5px rgba(0,0,0,.95),0 0 2px rgba(0,0,0,.6);">Raporu</span>
<span class=t style="left:0.0px;top:537px;font-size:14.5px;letter-spacing:0.250px;color:#fff;left:auto;right:15.2px;text-shadow:0 1px 1.5px rgba(0,0,0,.95),0 0 2px rgba(0,0,0,.6);">Temel</span>
<span class=t style="left:0.0px;top:554px;font-size:14.5px;letter-spacing:0.250px;color:#fff;left:auto;right:6.8px;text-shadow:0 1px 1.5px rgba(0,0,0,.95),0 0 2px rgba(0,0,0,.6);">Terminal</span>
<span class=t style="left:0.0px;top:571px;font-size:14.5px;letter-spacing:0.250px;color:#fff;left:auto;right:3.7px;text-shadow:0 1px 1.5px rgba(0,0,0,.95),0 0 2px rgba(0,0,0,.6);">Komutları</span>
<span class=t style="left:0.0px;top:656px;font-size:14.5px;letter-spacing:0.250px;color:#fff;left:auto;right:11.0px;text-shadow:0 1px 1.5px rgba(0,0,0,.95),0 0 2px rgba(0,0,0,.6);">Ayrıntılı</span>
<span class=t style="left:0.0px;top:673px;font-size:14.5px;letter-spacing:0.250px;color:#fff;left:auto;right:7.2px;text-shadow:0 1px 1.5px rgba(0,0,0,.95),0 0 2px rgba(0,0,0,.6);">Terminal</span>
<span class=t style="left:0.0px;top:690px;font-size:14.5px;letter-spacing:0.250px;color:#fff;left:auto;right:3.7px;text-shadow:0 1px 1.5px rgba(0,0,0,.95),0 0 2px rgba(0,0,0,.6);">Komutları</span>
<span class=t style="left:1673.3px;top:776px;font-size:14.5px;letter-spacing:-0.039px;color:#fff;text-shadow:0 1px 1.5px rgba(0,0,0,.95),0 0 2px rgba(0,0,0,.6);">Temel CMD</span>
<span class=t style="left:1675.4px;top:793px;font-size:14.5px;letter-spacing:0.422px;color:#fff;text-shadow:0 1px 1.5px rgba(0,0,0,.95),0 0 2px rgba(0,0,0,.6);">Komutları.</span>
<span class=t style="left:1702.0px;top:809px;font-size:14.5px;letter-spacing:1.075px;color:#fff;text-shadow:0 1px 1.5px rgba(0,0,0,.95),0 0 2px rgba(0,0,0,.6);">txt</span>
</div>
<div id="ws" class="win" style="left:60px;top:36px;width:960px;height:798px;background:#efece7">
<div class=tb></div>
<svg class=a style="left:897.75px;top:6.75px;" width="16.5" height="16.5" viewBox="0 0 16.5 16.5"><circle cx='8.25' cy='8.25' r='8.1' fill='#605f59'/><circle cx='8.25' cy='8.25' r='7.7' fill='none' stroke='#4a4944' stroke-width='.8'/><path d='M4.4 8.6H12.2' stroke='#3b3a36' stroke-width='1.3' fill='none'/></svg><svg class=a style="left:917.75px;top:6.75px;" width="16.5" height="16.5" viewBox="0 0 16.5 16.5"><circle cx='8.25' cy='8.25' r='8.1' fill='#605f59'/><circle cx='8.25' cy='8.25' r='7.7' fill='none' stroke='#4a4944' stroke-width='.8'/><rect x='4.7' y='4.7' width='7.1' height='7.1' stroke='#3b3a36' stroke-width='1.2' fill='none'/></svg><svg class=a style="left:937.75px;top:6.75px;" width="16.5" height="16.5" viewBox="0 0 16.5 16.5"><circle cx='8.25' cy='8.25' r='8.1' fill='#605f59'/><circle cx='8.25' cy='8.25' r='7.7' fill='none' stroke='#4a4944' stroke-width='.8'/><path d='M5.6 5.6L10.9 10.9M10.9 5.6L5.6 10.9' stroke='#3b3a36' stroke-width='1.2' fill='none'/></svg>
<div class=a style="left:0px;top:30px;width:960px;height:19px;background:#efece7"></div>
<div class=a style="left:0px;top:49px;width:960px;height:1px;background:#d3d0cb"></div>
<div class=a style="left:0px;top:50px;width:960px;height:38px;background:linear-gradient(#f8f6f2,#f2f0ec)"></div>
<div class=a style="left:0px;top:88px;width:960px;height:1px;background:#c4c1bc"></div>
<div class=a style="left:0px;top:89px;width:960px;height:29px;background:#f1efeb"></div>
<div class=a style="left:0px;top:118px;width:960px;height:2px;background:#bab7b2"></div>
<div class=a style="left:4px;top:94px;width:826px;height:19px;box-sizing:border-box;border:1px solid #8d8b86;border-radius:3.5px;background:#fff;overflow:hidden"><div class=a style='left:17.4px;top:0;width:745.4px;height:17px;background:#afffaf'></div></div>
<div class=a style="left:929px;top:99px;width:1px;height:11px;background:#cfccc7"></div>
<div class=a style="left:0px;top:120px;width:960px;height:200px;background:#fff"></div>
<div class=a style="left:0px;top:120px;width:960px;height:18px;background:linear-gradient(#fbfaf9,#ebe9e5)"></div>
<div class=a style="left:0px;top:138px;width:960px;height:1px;background:#cdcac5"></div>
<div class=a style="left:64px;top:120px;width:1px;height:18px;background:#d2cfca"></div>
<div class=a style="left:165px;top:120px;width:1px;height:18px;background:#d2cfca"></div>
<div class=a style="left:316px;top:120px;width:1px;height:18px;background:#d2cfca"></div>
<div class=a style="left:467px;top:120px;width:1px;height:18px;background:#d2cfca"></div>
<div class=a style="left:525px;top:120px;width:1px;height:18px;background:#d2cfca"></div>
<div class=a style="left:568px;top:120px;width:1px;height:18px;background:#d2cfca"></div>
<div class=a style="left:526px;top:121px;width:41.5px;height:17px;overflow:hidden"><span class=t style='left:1.5px;top:-1px;font-size:13.5px;letter-spacing:.5px;color:#111'>Length</span></div>
<div class='a pr' style="left:0px;top:139px;width:960px;height:14px;background:#308cc6;color:#fff"><div class=c style='left:0px;width:64px;top:1px;padding-right:2.2px;text-align:right;'>96</div><div class=c style='left:65px;width:101px;top:1px;padding-left:2.7px;'>222.618908641</div><div class=c style='left:167px;width:149px;top:1px;padding-left:2.4px;'>192.168.0.29</div><div class=c style='left:317px;width:150px;top:1px;padding-left:3.4px;'>192.168.0.28</div><div class=c style='left:468px;width:57px;top:1px;padding-left:2.8px;'>ICMP</div><div class=c style='left:526px;width:42px;top:1px;padding-right:2.2px;text-align:right;'>74</div><div class=c style='left:569px;width:391px;top:1px;padding-left:2.8px;'>Echo (ping) request  id=0x0001, seq=1/256, ttl=128 (reply in 97)</div></div>
<div class='a pr' style="left:0px;top:153px;width:960px;height:14px;background:#fce0ff;color:#12272e"><div class=c style='left:0px;width:64px;top:0px;padding-right:2.2px;text-align:right;'>98</div><div class=c style='left:65px;width:101px;top:0px;padding-left:2.7px;'>223.642778491</div><div class=c style='left:167px;width:149px;top:0px;padding-left:2.4px;'>192.168.0.29</div><div class=c style='left:317px;width:150px;top:0px;padding-left:3.4px;'>192.168.0.28</div><div class=c style='left:468px;width:57px;top:0px;padding-left:2.8px;'>ICMP</div><div class=c style='left:526px;width:42px;top:0px;padding-right:2.2px;text-align:right;'>74</div><div class=c style='left:569px;width:391px;top:0px;padding-left:2.8px;'>Echo (ping) request  id=0x0001, seq=2/512, ttl=128 (reply in 99)</div></div>
<div class='a pr' style="left:0px;top:167px;width:960px;height:14px;background:#fce0ff;color:#12272e"><div class=c style='left:0px;width:64px;top:0px;padding-right:2.2px;text-align:right;'>100</div><div class=c style='left:65px;width:101px;top:0px;padding-left:2.7px;'>224.666951568</div><div class=c style='left:167px;width:149px;top:0px;padding-left:2.4px;'>192.168.0.29</div><div class=c style='left:317px;width:150px;top:0px;padding-left:3.4px;'>192.168.0.28</div><div class=c style='left:468px;width:57px;top:0px;padding-left:2.8px;'>ICMP</div><div class=c style='left:526px;width:42px;top:0px;padding-right:2.2px;text-align:right;'>74</div><div class=c style='left:569px;width:391px;top:0px;padding-left:2.8px;'>Echo (ping) request  id=0x0001, seq=3/768, ttl=128 (reply in 101)</div></div>
<div class='a pr' style="left:0px;top:181px;width:960px;height:14px;background:#fce0ff;color:#12272e"><div class=c style='left:0px;width:64px;top:0px;padding-right:2.2px;text-align:right;'>102</div><div class=c style='left:65px;width:101px;top:0px;padding-left:2.7px;'>225.793156866</div><div class=c style='left:167px;width:149px;top:0px;padding-left:2.4px;'>192.168.0.29</div><div class=c style='left:317px;width:150px;top:0px;padding-left:3.4px;'>192.168.0.28</div><div class=c style='left:468px;width:57px;top:0px;padding-left:2.8px;'>ICMP</div><div class=c style='left:526px;width:42px;top:0px;padding-right:2.2px;text-align:right;'>74</div><div class=c style='left:569px;width:391px;top:0px;padding-left:2.8px;'>Echo (ping) request  id=0x0001, seq=4/1024, ttl=128 (reply in 103)</div></div>
<svg class=a style="left:0px;top:139px;" width="20" height="56" viewBox="0 0 20 56"><path d='M3.5 7.5H13' stroke='#fff' fill='none'/><path d='M12 5.5L16 7.5L12 9.5Z' fill='#fff'/><path d='M8.5 8V14' stroke='#fff' fill='none'/><path d='M8.5 14V50H15' stroke='#7b7b7b' fill='none'/></svg>
<div class=a style="left:0px;top:320px;width:960px;height:15px;box-sizing:border-box;border:1px solid #b9b6b1;border-left:0;border-right:0;background:#dedcd8"></div>
<div class=a style="left:0px;top:321px;width:14px;height:13px;background:linear-gradient(#fbfbfa,#ecebe8);border-right:1px solid #b9b6b1"></div>
<div class=a style="left:15px;top:321px;width:480px;height:13px;background:linear-gradient(#fcfcfb,#eeedea);border-right:1px solid #b9b6b1"></div>
<div class=a style="left:945px;top:321px;width:14px;height:13px;background:linear-gradient(#fbfbfa,#ecebe8);border-left:1px solid #b9b6b1"></div>
<svg class=a style="left:4px;top:323.5px;" width="6" height="8" viewBox="0 0 6 8"><path d='M5 0.3V7.7L0.6 4Z' fill='#3a3a3a'/></svg>
<svg class=a style="left:950px;top:323.5px;" width="6" height="8" viewBox="0 0 6 8"><path d='M0.8 0.3V7.7L5.2 4Z' fill='#3a3a3a'/></svg>
<div class=a style="left:0px;top:335px;width:960px;height:4px;background:#efece7"></div>
<div class=a style="left:473px;top:336.5px;width:16px;height:1px;background:repeating-linear-gradient(90deg,#b8b5b0 0 1px,transparent 1px 3px)"></div>
<div class=a style="left:0px;top:339px;width:960px;height:1px;background:#bcb9b4"></div>
<div class=a style="left:0px;top:340px;width:960px;height:214px;background:#fff"></div>
<div class='a pr' style="left:21px;top:340px;width:939px;height:14px;background:#efece7"><div class=c style='left:0;width:930px;padding-left:3.3px;top:0'>Frame 96: 74 bytes on wire (592 bits), 74 bytes captured (592 bits) on interface 0</div></div>
<svg class=a style="left:7px;top:342px;" width="8" height="10" viewBox="0 0 8 10"><path d='M1.2 0.4V9.6L6.4 5Z' fill='#4a4a4a'/></svg>
<div class='a pr' style="left:21px;top:354px;width:939px;height:14px;background:#efece7"><div class=c style='left:0;width:930px;padding-left:3.3px;top:0'>Ethernet II, Src: Vmware_f7:f8:4e (00:0c:29:f7:f8:4e), Dst: IntelCor_7b:d5:36 (3c:6a:a7:7b:d5:36)</div></div>
<svg class=a style="left:7px;top:356px;" width="8" height="10" viewBox="0 0 8 10"><path d='M1.2 0.4V9.6L6.4 5Z' fill='#4a4a4a'/></svg>
<div class='a pr' style="left:21px;top:368px;width:939px;height:14px;background:#efece7"><div class=c style='left:0;width:930px;padding-left:3.3px;top:0'>Internet Protocol Version 4, Src: 192.168.0.29, Dst: 192.168.0.28</div></div>
<svg class=a style="left:7px;top:370px;" width="8" height="10" viewBox="0 0 8 10"><path d='M1.2 0.4V9.6L6.4 5Z' fill='#4a4a4a'/></svg>
<div class='a pr' style="left:21px;top:382px;width:939px;height:14px;background:#efece7"><div class=c style='left:0;width:930px;padding-left:3.3px;top:0'>Internet Control Message Protocol</div></div>
<svg class=a style="left:7px;top:384px;" width="8" height="10" viewBox="0 0 8 10"><path d='M1.2 0.4V9.6L6.4 5Z' fill='#4a4a4a'/></svg>
<div class=a style="left:0px;top:554px;width:960px;height:1px;background:#bcb9b4"></div>
<div class=a style="left:0px;top:555px;width:960px;height:4px;background:#efece7"></div>
<div class=a style="left:473px;top:556.5px;width:16px;height:1px;background:repeating-linear-gradient(90deg,#b8b5b0 0 1px,transparent 1px 3px)"></div>
<div class=a style="left:0px;top:559px;width:960px;height:1px;background:#bcb9b4"></div>
<div class=a style="left:0px;top:560px;width:960px;height:215px;background:#fff"></div>
<div class=a style="left:0px;top:560px;width:43px;height:215px;background:#efece7"></div>
<div class='a pr bx' style="left:0px;top:560px;width:960px;height:14px;letter-spacing:-.2px"><div class=c style='left:8px;color:#9e9c98'>0000</div><div class=c style='left:50px'>3c 6a a7 7b d5 36 00 0c  29 f7 f8 4e 08 00 45 00</div><div class=c style='left:407px'>&lt;j<i>·</i>{<i>·</i>6<i>·</i><i>·</i> )<i>·</i><i>·</i>N<i>·</i><i>·</i>E<i>·</i></div></div>
<div class='a pr bx' style="left:0px;top:574px;width:960px;height:14px;letter-spacing:-.2px"><div class=c style='left:8px;color:#9e9c98'>0010</div><div class=c style='left:50px'>00 3c 74 b9 00 00 80 01  44 7e c0 a8 00 1d c0 a8</div><div class=c style='left:407px'><i>·</i>&lt;t<i>·</i><i>·</i><i>·</i><i>·</i><i>·</i> D~<i>·</i><i>·</i><i>·</i><i>·</i><i>·</i><i>·</i></div></div>
<div class='a pr bx' style="left:0px;top:588px;width:960px;height:14px;letter-spacing:-.2px"><div class=c style='left:8px;color:#9e9c98'>0020</div><div class=c style='left:50px'>00 1c 08 00 4d 5a 00 01  00 01 61 62 63 64 65 66</div><div class=c style='left:407px'><i>·</i><i>·</i><i>·</i><i>·</i>MZ<i>·</i><i>·</i> <i>·</i><i>·</i>abcdef</div></div>
<div class='a pr bx' style="left:0px;top:602px;width:960px;height:14px;letter-spacing:-.2px"><div class=c style='left:8px;color:#9e9c98'>0030</div><div class=c style='left:50px'>67 68 69 6a 6b 6c 6d 6e  6f 70 71 72 73 74 75 76</div><div class=c style='left:407px'>ghijklmn opqrstuv</div></div>
<div class='a pr bx' style="left:0px;top:616px;width:960px;height:14px;letter-spacing:-.2px"><div class=c style='left:8px;color:#9e9c98'>0040</div><div class=c style='left:50px'>77 61 62 63 64 65 66 67  68 69</div><div class=c style='left:407px'>wabcdefg hi</div></div>
<div class=a style="left:0px;top:775px;width:960px;height:1px;background:#c9c6c1"></div>
<div class=a style="left:0px;top:776px;width:960px;height:22px;background:#efece7"></div>
<div class=a style="left:581.5px;top:779px;width:1px;height:17px;background:repeating-linear-gradient(#aaa7a2 0 1px,transparent 1px 3px)"></div>
<div class=a style="left:829px;top:779px;width:1px;height:17px;background:repeating-linear-gradient(#aaa7a2 0 1px,transparent 1px 3px)"></div>
<svg class=a style="left:9px;top:779px;" width="16" height="16" viewBox="0 0 16 16"><circle cx='7.6' cy='7.6' r='6.6' fill='#b5eaea' stroke='#4d6f73' stroke-width='1'/></svg>
<svg class=a style="left:32px;top:779px;" width="16" height="16" viewBox="0 0 16 16"><rect x='1.5' y='2.5' width='11' height='12' fill='#f4f4f4' stroke='#9a9a9a'/><path d='M3.5 6H10M3.5 8.5H10M3.5 11H8' stroke='#b5b5b5'/><path d='M6 9.5L13 2.5L14.5 4L7.5 11L5.5 11.5Z' fill='#444'/><path d='M2 1.5H9V4H2Z' fill='#3b76c4'/></svg>
<svg class=a style="left:948px;top:787px;" width="11" height="11" viewBox="0 0 11 11"><g fill='#aaa7a2'><rect x='8' y='0' width='1' height='1'/><rect x='8' y='3' width='1' height='1'/><rect x='5' y='3' width='1' height='1'/><rect x='8' y='6' width='1' height='1'/><rect x='5' y='6' width='1' height='1'/><rect x='2' y='6' width='1' height='1'/><rect x='8' y='9' width='1' height='1'/><rect x='5' y='9' width='1' height='1'/><rect x='2' y='9' width='1' height='1'/></g></svg>
<svg class=a style='left:0;top:50px' width='960' height='70' viewBox='60 86 960 70'><defs>
<linearGradient id="gg" x1="0" y1="0" x2="0" y2="1"><stop offset="0" stop-color="#7fbf2a"/><stop offset="1" stop-color="#4a9707"/></linearGradient>
<linearGradient id="gf" x1="0" y1="0" x2="0" y2="1"><stop offset="0" stop-color="#a9a7a4"/><stop offset="1" stop-color="#d6d4d1"/></linearGradient>
<linearGradient id="gd" x1="0" y1="0" x2="0" y2="1"><stop offset="0" stop-color="#eeece9"/><stop offset="1" stop-color="#f7f6f4"/></linearGradient>
</defs><rect x='64.5' y='90.5' width='31.0' height='30.0' rx='3.2' fill='#dddad7' stroke='#c9c6c2' stroke-width='1'/><rect x='540.5' y='90.5' width='31.0' height='30.0' rx='3.2' fill='#dddad7' stroke='#c9c6c2' stroke-width='1'/><rect x='580.5' y='90.5' width='31.0' height='30.0' rx='3.2' fill='#dddad7' stroke='#c9c6c2' stroke-width='1'/><path d='M199.5 96V115' stroke='#cfccc7' stroke-width='1'/><path d='M200.5 96V115' stroke='#fbfaf9' stroke-width='1'/><path d='M338.5 96V115' stroke='#cfccc7' stroke-width='1'/><path d='M339.5 96V115' stroke='#fbfaf9' stroke-width='1'/><path d='M576.5 96V115' stroke='#cfccc7' stroke-width='1'/><path d='M577.5 96V115' stroke='#fbfaf9' stroke-width='1'/><path d='M616.5 96V115' stroke='#cfccc7' stroke-width='1'/><path d='M617.5 96V115' stroke='#fbfaf9' stroke-width='1'/><path d='M69 116.2 C72 106 78.5 97.5 90.9 93.6 C86 101 85.6 108.5 90.6 116.2 Z' fill='#fff' stroke='#9a9895' stroke-width='.9' stroke-linejoin='round'/><path d='M71.2 114.9 C74 106 79.6 98.9 89.1 95.5 C85.2 102 85 108.5 88.6 114.9 Z' fill='#aaa7a5'/><rect x='102.5' y='94.5' width='21' height='21' fill='#f6f5f3' stroke='#8e8e8c' stroke-width='1'/><rect x='105' y='97' width='16.2' height='16' fill='#dc0000'/><path d='M135 116.2 C138 106 144.5 97.5 156.9 93.6 C152 101 151.6 108.5 156.6 116.2 Z' fill='#fff' stroke='#8a8a88' stroke-width='.9' stroke-linejoin='round'/><path d='M137.2 114.9 C140 106 145.6 98.9 155.1 95.5 C151.2 102 151 108.5 154.6 114.9 Z' fill='#22d410'/><path d='M143.6 108.4A3.5 3.5 0 1 0 147.3 105.3' fill='none' stroke='#fff' stroke-width='1.8'/><path d='M148.4 102.4L143.6 104.2L147.8 107.9Z' fill='#fff'/><circle cx='179.2' cy='104.8' r='11.2' fill='#f6f5f3' stroke='#b3b1ad' stroke-width='1'/><circle cx='179.2' cy='104.8' r='8.9' fill='#7d7d7b'/><path d='M186.10 103.60L186.10 106.00L184.35 106.04L183.72 107.57L184.93 108.83L183.23 110.53L181.97 109.32L180.44 109.95L180.40 111.70L178.00 111.70L177.96 109.95L176.43 109.32L175.17 110.53L173.47 108.83L174.68 107.57L174.05 106.04L172.30 106.00L172.30 103.60L174.05 103.56L174.68 102.03L173.47 100.77L175.17 99.07L176.43 100.28L177.96 99.65L178.00 97.90L180.40 97.90L180.44 99.65L181.97 100.28L183.23 99.07L184.93 100.77L183.72 102.03L184.35 103.56Z' fill='#fbfbfa'/><circle cx='179.2' cy='104.8' r='3.7' fill='#7d7d7b'/><path d='M208.5 98.5V97Q208.5 96 209.5 96H215.5Q216.5 96 216.5 97V98.5Z' fill='#c9c7c4' stroke='#b5b3b0' stroke-width='.8'/><rect x='208.2' y='98.3' width='21.6' height='17' rx='1' fill='url(#gf)' stroke='#b0aeab' stroke-width='.8'/><path d='M208.8 99.8H229.2' stroke='#f1f0ee' stroke-width='1'/><path d='M242.5 93.7H257L261.6 98.3V116.3H242.5Z' fill='url(#gd)' stroke='#bebbb7' stroke-width='1'/><path d='M243 94.2H256.8V98.4H243Z' fill='#c6c3bf'/><path d='M247 98.4C248 96.5 249.5 95 251.6 94.2C250.8 95.6 250.8 97 251.6 98.4Z' fill='#fff'/><path d='M257 93.7V98.3H261.6Z' fill='#e2e0dd' stroke='#bebbb7' stroke-width='.8'/><rect x='246.65' y='101.65' width='1.7' height='3.1' rx='.8' fill='none' stroke='#c9c7c3' stroke-width='.7'/><path d='M249.80 102.40L250.60 101.60V104.80M249.70 104.75H251.50' fill='none' stroke='#c9c7c3' stroke-width='.7'/><rect x='252.65' y='101.65' width='1.7' height='3.1' rx='.8' fill='none' stroke='#c9c7c3' stroke-width='.7'/><path d='M255.80 102.40L256.60 101.60V104.80M255.70 104.75H257.50' fill='none' stroke='#c9c7c3' stroke-width='.7'/><rect x='246.65' y='106.35' width='1.7' height='3.1' rx='.8' fill='none' stroke='#c9c7c3' stroke-width='.7'/><path d='M249.80 107.10L250.60 106.30V109.50M249.70 109.45H251.50' fill='none' stroke='#c9c7c3' stroke-width='.7'/><path d='M252.80 107.10L253.60 106.30V109.50M252.70 109.45H254.50' fill='none' stroke='#c9c7c3' stroke-width='.7'/><rect x='255.65' y='106.35' width='1.7' height='3.1' rx='.8' fill='none' stroke='#c9c7c3' stroke-width='.7'/><rect x='246.65' y='111.05' width='1.7' height='3.1' rx='.8' fill='none' stroke='#c9c7c3' stroke-width='.7'/><path d='M249.80 111.80L250.60 111.00V114.20M249.70 114.15H251.50' fill='none' stroke='#c9c7c3' stroke-width='.7'/><path d='M252.80 111.80L253.60 111.00V114.20M252.70 114.15H254.50' fill='none' stroke='#c9c7c3' stroke-width='.7'/><path d='M255.80 111.80L256.60 111.00V114.20M255.70 114.15H257.50' fill='none' stroke='#c9c7c3' stroke-width='.7'/><path d='M275.5 93.7H290L294.6 98.3V116.3H275.5Z' fill='url(#gd)' stroke='#bebbb7' stroke-width='1'/><path d='M276 94.2H289.8V98.4H276Z' fill='#c6c3bf'/><path d='M280 98.4C281 96.5 282.5 95 284.6 94.2C283.8 95.6 283.8 97 284.6 98.4Z' fill='#fff'/><path d='M290 93.7V98.3H294.6Z' fill='#e2e0dd' stroke='#bebbb7' stroke-width='.8'/><rect x='279.65' y='101.65' width='1.7' height='3.1' rx='.8' fill='none' stroke='#c9c7c3' stroke-width='.7'/><path d='M282.80 102.40L283.60 101.60V104.80M282.70 104.75H284.50' fill='none' stroke='#c9c7c3' stroke-width='.7'/><rect x='285.65' y='101.65' width='1.7' height='3.1' rx='.8' fill='none' stroke='#c9c7c3' stroke-width='.7'/><path d='M288.80 102.40L289.60 101.60V104.80M288.70 104.75H290.50' fill='none' stroke='#c9c7c3' stroke-width='.7'/><rect x='279.65' y='106.35' width='1.7' height='3.1' rx='.8' fill='none' stroke='#c9c7c3' stroke-width='.7'/><path d='M282.80 107.10L283.60 106.30V109.50M282.70 109.45H284.50' fill='none' stroke='#c9c7c3' stroke-width='.7'/><path d='M285.80 107.10L286.60 106.30V109.50M285.70 109.45H287.50' fill='none' stroke='#c9c7c3' stroke-width='.7'/><rect x='288.65' y='106.35' width='1.7' height='3.1' rx='.8' fill='none' stroke='#c9c7c3' stroke-width='.7'/><rect x='279.65' y='111.05' width='1.7' height='3.1' rx='.8' fill='none' stroke='#c9c7c3' stroke-width='.7'/><path d='M282.80 111.80L283.60 111.00V114.20M282.70 114.15H284.50' fill='none' stroke='#c9c7c3' stroke-width='.7'/><path d='M285.80 111.80L286.60 111.00V114.20M285.70 114.15H287.50' fill='none' stroke='#c9c7c3' stroke-width='.7'/><path d='M288.80 111.80L289.60 111.00V114.20M288.70 114.15H290.50' fill='none' stroke='#c9c7c3' stroke-width='.7'/><path d='M278.4 98.6L291.6 111.6M291.6 98.6L278.4 111.6' stroke='#6f6d6b' stroke-width='2' fill='none'/><path d='M308.5 93.7H323L327.6 98.3V116.3H308.5Z' fill='url(#gd)' stroke='#bebbb7' stroke-width='1'/><path d='M309 94.2H322.8V98.4H309Z' fill='#c6c3bf'/><path d='M313 98.4C314 96.5 315.5 95 317.6 94.2C316.8 95.6 316.8 97 317.6 98.4Z' fill='#fff'/><path d='M323 93.7V98.3H327.6Z' fill='#e2e0dd' stroke='#bebbb7' stroke-width='.8'/><rect x='312.65' y='101.65' width='1.7' height='3.1' rx='.8' fill='none' stroke='#c9c7c3' stroke-width='.7'/><path d='M315.80 102.40L316.60 101.60V104.80M315.70 104.75H317.50' fill='none' stroke='#c9c7c3' stroke-width='.7'/><rect x='318.65' y='101.65' width='1.7' height='3.1' rx='.8' fill='none' stroke='#c9c7c3' stroke-width='.7'/><path d='M321.80 102.40L322.60 101.60V104.80M321.70 104.75H323.50' fill='none' stroke='#c9c7c3' stroke-width='.7'/><rect x='312.65' y='106.35' width='1.7' height='3.1' rx='.8' fill='none' stroke='#c9c7c3' stroke-width='.7'/><path d='M315.80 107.10L316.60 106.30V109.50M315.70 109.45H317.50' fill='none' stroke='#c9c7c3' stroke-width='.7'/><path d='M318.80 107.10L319.60 106.30V109.50M318.70 109.45H320.50' fill='none' stroke='#c9c7c3' stroke-width='.7'/><rect x='321.65' y='106.35' width='1.7' height='3.1' rx='.8' fill='none' stroke='#c9c7c3' stroke-width='.7'/><rect x='312.65' y='111.05' width='1.7' height='3.1' rx='.8' fill='none' stroke='#c9c7c3' stroke-width='.7'/><path d='M315.80 111.80L316.60 111.00V114.20M315.70 114.15H317.50' fill='none' stroke='#c9c7c3' stroke-width='.7'/><path d='M318.80 111.80L319.60 111.00V114.20M318.70 114.15H320.50' fill='none' stroke='#c9c7c3' stroke-width='.7'/><path d='M321.80 111.80L322.60 111.00V114.20M321.70 114.15H323.50' fill='none' stroke='#c9c7c3' stroke-width='.7'/><path d='M320.5 99.6A5.9 5.9 0 1 0 323.6 104.2' stroke='#7b7977' stroke-width='1.8' fill='none'/><path d='M317.2 97L321.8 99.2L318.2 102.4Z' fill='#7b7977'/><path d='M360.2 106.9L364.4 114.2' stroke='#2e3436' stroke-width='3.1' stroke-linecap='round'/><circle cx='356.6' cy='100.8' r='6.5' fill='#eeeeec' stroke='#2e3436' stroke-width='1.25'/><path d='M352 99.5A4.8 4.8 0 0 1 355.2 96.2' stroke='#fff' stroke-width='1' fill='none'/><path d='M382.3 104.9L390.4 97.2V101.4H400.6V108.4H390.4V112.60000000000001Z' fill='#fff' stroke='#a3a3a0' stroke-width='2.5' stroke-linejoin='round'/><path d='M382.3 104.9L390.4 97.2V101.4H400.6V108.4H390.4V112.60000000000001Z' fill='url(#gg)' stroke='#fff' stroke-width='1.5' stroke-linejoin='round'/><path d='M433 104.9L423.5 97.2V101.4H414.2V108.4H423.5V112.60000000000001Z' fill='#fff' stroke='#a3a3a0' stroke-width='2.5' stroke-linejoin='round'/><path d='M433 104.9L423.5 97.2V101.4H414.2V108.4H423.5V112.60000000000001Z' fill='url(#gg)' stroke='#fff' stroke-width='1.5' stroke-linejoin='round'/><path d='M447 95.5H469' stroke='#2e3436' stroke-width='1.25'/><path d='M447 98.5H469' stroke='#2e3436' stroke-width='1.25'/><path d='M447 101.5H469' stroke='#2e3436' stroke-width='1.25'/><path d='M447 104.5H469' stroke='#2e3436' stroke-width='1.25'/><path d='M447 107.5H469' stroke='#2e3436' stroke-width='1.25'/><path d='M447 110.5H469' stroke='#2e3436' stroke-width='1.25'/><path d='M447 113.5H469' stroke='#2e3436' stroke-width='1.25'/><path d='M447 116.5H469' stroke='#2e3436' stroke-width='1.25'/><rect x='457' y='100.2' width='12' height='2.7' fill='#fce94f'/><rect x='447' y='100' width='16' height='3' fill='#f6f4ef'/><path d='M462.3 101.6L453 94.3V98.19999999999999H446.4V105.0H453V108.89999999999999Z' fill='#fff' stroke='#a3a3a0' stroke-width='2.5' stroke-linejoin='round'/><path d='M462.3 101.6L453 94.3V98.19999999999999H446.4V105.0H453V108.89999999999999Z' fill='url(#gg)' stroke='#fff' stroke-width='1.5' stroke-linejoin='round'/><rect x='479.4' y='94.3' width='21.2' height='2.6' rx='1.3' fill='#fff' stroke='#9b9b98' stroke-width='.9'/><path d='M490 99L497.7 106.7H493.6V114.4H486.4V106.7H482.3Z' fill='#fff' stroke='#a3a3a0' stroke-width='2.5' stroke-linejoin='round'/><path d='M490 99L497.7 106.7H493.6V114.4H486.4V106.7H482.3Z' fill='url(#gg)' stroke='#fff' stroke-width='1.5' stroke-linejoin='round'/><path d='M523 110.8L530.7 102.6H526.6V95.6H519.4V102.6H515.3Z' fill='#fff' stroke='#a3a3a0' stroke-width='2.5' stroke-linejoin='round'/><path d='M523 110.8L530.7 102.6H526.6V95.6H519.4V102.6H515.3Z' fill='url(#gg)' stroke='#fff' stroke-width='1.5' stroke-linejoin='round'/><rect x='512.4' y='113.2' width='21.2' height='2.6' rx='1.3' fill='#fff' stroke='#9b9b98' stroke-width='.9'/><rect x='545' y='94' width='22' height='22' fill='#fbfbfa'/><path d='M545 97.3H567' stroke='#babdb6' stroke-width='1.1'/><path d='M545 100.3H567' stroke='#babdb6' stroke-width='1.1'/><path d='M545 103.3H567' stroke='#babdb6' stroke-width='1.1'/><path d='M545 106.4H567' stroke='#babdb6' stroke-width='1.1'/><path d='M545 109.3H567' stroke='#babdb6' stroke-width='1.1'/><path d='M545 112.3H567' stroke='#babdb6' stroke-width='1.1'/><path d='M545 94.4H567M545 115.6H567' stroke='#2e3436' stroke-width='1.3'/><path d='M554.8 110.6Q560.5 109.4 566.2 110.6Q565.4 112.4 563 113.8L561.5 116.2H559.5L558 113.8Q555.6 112.4 554.8 110.6Z' fill='#3465a4'/><rect x='585' y='94' width='22' height='22' fill='#fbfbfa'/><path d='M585 97.3H607' stroke='#ef2929' stroke-width='1.25'/><path d='M585 100.3H607' stroke='#3465a4' stroke-width='1.25'/><path d='M585 103.3H607' stroke='#73d216' stroke-width='1.25'/><path d='M585 106.4H607' stroke='#3465a4' stroke-width='1.25'/><path d='M585 109.3H607' stroke='#75507b' stroke-width='1.25'/><path d='M585 112.3H607' stroke='#c4a000' stroke-width='1.25'/><path d='M585 94.4H607M585 115.6H607' stroke='#2e3436' stroke-width='1.3'/><path d='M639.1 107.8L644.8 113.4' stroke='#2e3436' stroke-width='3.1' stroke-linecap='round'/><circle cx='633.5' cy='102.3' r='7.3' fill='#eeeeec' stroke='#2e3436' stroke-width='1.25'/><path d='M630 102.3H637M633.5 98.8V105.8' stroke='#2e3436' stroke-width='1.3'/><path d='M671.9 107.8L677.6 113.4' stroke='#2e3436' stroke-width='3.1' stroke-linecap='round'/><circle cx='666.3' cy='102.3' r='7.3' fill='#eeeeec' stroke='#2e3436' stroke-width='1.25'/><path d='M662.8 102.3H669.8' stroke='#2e3436' stroke-width='1.3'/><path d='M705.1 107.8L710.8 113.4' stroke='#2e3436' stroke-width='3.1' stroke-linecap='round'/><circle cx='699.5' cy='102.3' r='7.3' fill='#eeeeec' stroke='#2e3436' stroke-width='1.25'/><path d='M696 100.9H703M696 103.7H703' stroke='#2e3436' stroke-width='1.2'/><path d='M724 97.3H746' stroke='#c3c6bf' stroke-width='1.1'/><path d='M724 100.3H746' stroke='#c3c6bf' stroke-width='1.1'/><path d='M724 103.3H746' stroke='#c3c6bf' stroke-width='1.1'/><path d='M724 106.4H746' stroke='#c3c6bf' stroke-width='1.1'/><path d='M724 109.3H746' stroke='#c3c6bf' stroke-width='1.1'/><path d='M724 112.3H746' stroke='#c3c6bf' stroke-width='1.1'/><path d='M729.6 94V116M737.6 94V116' stroke='#555753' stroke-width='1.1'/><path d='M724 94.4H746M724 115.6H746' stroke='#2e3436' stroke-width='1.3'/><path d='M726 98V104L729.4 101.6V100.4Z' fill='#3465a4'/><path d='M741 98V104L737.6 101.6V100.4Z' fill='#3465a4'/><path d='M69 132.6H77.2V146.2L73.1 142.6L69 146.2Z' fill='#6a9bd6' stroke='#5484c0' stroke-width='.6'/><rect x='830.2' y='132' width='13.6' height='13.8' rx='2' fill='#8f8e89'/><path d='M832.2 134L841.8 143.8M841.8 134L832.2 143.8' stroke='#fff' stroke-width='1.4'/><rect x='847.4' y='132' width='23.4' height='13.8' rx='2' fill='#b7b5b0'/><path d='M851 137.2H861V134.2L867.6 138.9L861 143.6V140.6H851Z' fill='#fff'/><path d='M878.8 137.4H885.4L882.1 141.2Z' fill='#3c3c3c'/></svg>
<span class=t style="left:452.6px;top:5px;font-size:14.5px;letter-spacing:0.231px;font-weight:700;color:#8f8d87;text-shadow:0 -1px 0 rgba(0,0,0,.55);">*wlp2s0</span>
<span class=t style="left:9.8px;top:30px;font-size:13.5px;letter-spacing:-0.133px;color:#111;"><u>F</u>ile</span>
<span class=t style="left:45.0px;top:30px;font-size:13.5px;letter-spacing:0.153px;color:#111;"><u>E</u>dit</span>
<span class=t style="left:82.8px;top:30px;font-size:13.5px;letter-spacing:0.077px;color:#111;"><u>V</u>iew</span>
<span class=t style="left:125.7px;top:30px;font-size:13.5px;letter-spacing:-0.477px;color:#111;"><u>G</u>o</span>
<span class=t style="left:156.6px;top:30px;font-size:13.5px;letter-spacing:0.041px;color:#111;"><u>C</u>apture</span>
<span class=t style="left:218.8px;top:30px;font-size:13.5px;letter-spacing:-0.020px;color:#111;"><u>A</u>nalyze</span>
<span class=t style="left:280.7px;top:30px;font-size:13.5px;letter-spacing:0.114px;color:#111;"><u>S</u>tatistics</span>
<span class=t style="left:349.9px;top:30px;font-size:13.5px;letter-spacing:0.146px;color:#111;">Telephon<u>y</u></span>
<span class=t style="left:426.6px;top:30px;font-size:13.5px;letter-spacing:-0.062px;color:#111;"><u>W</u>ireless</span>
<span class=t style="left:491.4px;top:30px;font-size:13.5px;letter-spacing:0.197px;color:#111;"><u>T</u>ools</span>
<span class=t style="left:537.7px;top:30px;font-size:13.5px;letter-spacing:0.124px;color:#111;"><u>H</u>elp</span>
<span class=t style="left:25.6px;top:94px;font-size:13.5px;letter-spacing:0.261px;">ip.src == 192.168.0.29 and ip.dst == 192.168.0.28</span>
<span class=t style="left:839.3px;top:95px;font-size:13.5px;letter-spacing:-0.371px;">Expression…</span>
<span class=t style="left:939.5px;top:93px;font-size:15px;letter-spacing:0.234px;font-weight:700;color:#222;">+</span>
<span class=t style="left:2.7px;top:120px;font-size:13.5px;letter-spacing:-0.326px;color:#111;">No.</span>
<span class=t style="left:66.5px;top:120px;font-size:13.5px;letter-spacing:0.143px;color:#111;">Time</span>
<span class=t style="left:167.9px;top:120px;font-size:13.5px;letter-spacing:-0.215px;color:#111;">Source</span>
<span class=t style="left:318.3px;top:120px;font-size:13.5px;letter-spacing:0.157px;color:#111;">Destination</span>
<span class=t style="left:469.5px;top:120px;font-size:13.5px;letter-spacing:-0.031px;color:#111;">Protocol</span>
<span class=t style="left:570.5px;top:120px;font-size:13.5px;letter-spacing:0.220px;color:#111;">Info</span>
<span class=t style="left:63.0px;top:778px;font-size:13.5px;letter-spacing:-0.134px;color:#111;">wireshark_wlp2s0_20190621221414_ZVAaCS.pcapng</span>
<span class=t style="left:595.2px;top:778px;font-size:13.5px;letter-spacing:-0.023px;color:#111;">Packets: 113 · Displayed: 4 (3.5%)</span>
<span class=t style="left:841.8px;top:778px;font-size:13.5px;letter-spacing:0.042px;color:#111;">Profile: Default</span>
</div>
<div id="vb" class="win" style="left:1063px;top:159px;width:640px;height:554px;background:#efece7">
<div class=tb></div>
<svg class=a style="left:577.75px;top:6.75px;" width="16.5" height="16.5" viewBox="0 0 16.5 16.5"><circle cx='8.25' cy='8.25' r='8.1' fill='#605f59'/><circle cx='8.25' cy='8.25' r='7.7' fill='none' stroke='#4a4944' stroke-width='.8'/><path d='M4.4 8.6H12.2' stroke='#3b3a36' stroke-width='1.3' fill='none'/></svg><svg class=a style="left:597.75px;top:6.75px;" width="16.5" height="16.5" viewBox="0 0 16.5 16.5"><circle cx='8.25' cy='8.25' r='8.1' fill='#605f59'/><circle cx='8.25' cy='8.25' r='7.7' fill='none' stroke='#4a4944' stroke-width='.8'/><rect x='4.7' y='4.7' width='7.1' height='7.1' stroke='#3b3a36' stroke-width='1.2' fill='none'/></svg><svg class=a style="left:617.75px;top:6.75px;" width="16.5" height="16.5" viewBox="0 0 16.5 16.5"><circle cx='8.25' cy='8.25' r='8.1' fill='#605f59'/><circle cx='8.25' cy='8.25' r='7.7' fill='none' stroke='#4a4944' stroke-width='.8'/><path d='M5.6 5.6L10.9 10.9M10.9 5.6L5.6 10.9' stroke='#3b3a36' stroke-width='1.2' fill='none'/></svg>
<div class=a style="left:0px;top:30px;width:640px;height:22px;background:#efece7"></div>
<div class='a term' style="left:0px;top:52px;width:640px;height:480px;background:#000;overflow:hidden"><div style='position:relative;left:-.6px'><div class=tl>root@iktestmakinesi:~# ifconfig</div><div class=tl>eth0      Link encap:Ethernet  HWaddr 08:00:27:5a:4b:ed  </div><div class=tl>          inet addr:192.168.0.28  Bcast:192.168.0.255  Mask:255.255.255.0</div><div class=tl>          inet6 addr: fe80::a00:27ff:fe5a:4bed/64 Scope:Link</div><div class=tl>          UP BROADCAST RUNNING MULTICAST  MTU:1500  Metric:1</div><div class=tl>          RX packets:1008 errors:0 dropped:0 overruns:0 frame:0</div><div class=tl>          TX packets:238 errors:0 dropped:0 overruns:0 carrier:0</div><div class=tl>          collisions:0 txqueuelen:1000 </div><div class=tl>          RX bytes:111974 (111.9 KB)  TX bytes:176360 (176.3 KB)</div><div class=tl>&nbsp;</div><div class=tl>lo        Link encap:Local Loopback  </div><div class=tl>          inet addr:127.0.0.1  Mask:255.0.0.0</div><div class=tl>          inet6 addr: ::1/128 Scope:Host</div><div class=tl>          UP LOOPBACK RUNNING  MTU:65536  Metric:1</div><div class=tl>          RX packets:352 errors:0 dropped:0 overruns:0 frame:0</div><div class=tl>          TX packets:352 errors:0 dropped:0 overruns:0 carrier:0</div><div class=tl>          collisions:0 txqueuelen:0 </div><div class=tl>          RX bytes:27630 (27.6 KB)  TX bytes:27630 (27.6 KB)</div><div class=tl>&nbsp;</div><div class=tl>root@iktestmakinesi:~# </div></div></div>
<div class=a style="left:0px;top:532px;width:640px;height:22px;background:#efece7"></div>
<svg class=a style="left:627px;top:541px;" width="12" height="12" viewBox="0 0 12 12"><g fill='#b4b1ac'><rect x='9' y='0' width='1' height='1'/><rect x='9' y='3' width='1' height='1'/><rect x='6' y='3' width='1' height='1'/><rect x='9' y='6' width='1' height='1'/><rect x='6' y='6' width='1' height='1'/><rect x='3' y='6' width='1' height='1'/><rect x='9' y='9' width='1' height='1'/><rect x='6' y='9' width='1' height='1'/><rect x='3' y='9' width='1' height='1'/><rect x='0' y='9' width='1' height='1'/></g></svg>
<svg class=a style='left:337px;top:531px' width='220' height='23' viewBox='1400 690 220 23'><defs>
<linearGradient id="vb1" x1="0" y1="0" x2="0" y2="1"><stop offset="0" stop-color="#7cc0f8"/><stop offset="1" stop-color="#2a86e6"/></linearGradient>
<linearGradient id="vb2" x1="0" y1="0" x2="1" y2="1"><stop offset="0" stop-color="#6ab4fa"/><stop offset=".5" stop-color="#3a94f2"/><stop offset=".51" stop-color="#2a84ea"/><stop offset="1" stop-color="#2377e0"/></linearGradient>
<linearGradient id="vbf" x1="0" y1="0" x2="0" y2="1"><stop offset="0" stop-color="#dcdcdc"/><stop offset="1" stop-color="#b4b4b4"/></linearGradient>
<linearGradient id="vbg" x1="0" y1="0" x2="1" y2="1"><stop offset="0" stop-color="#e8f4fc"/><stop offset="1" stop-color="#3a8fe0"/></linearGradient>
</defs><rect x='1405.6' y='694.4' width='12.2' height='14' rx='1.6' fill='url(#vb1)' stroke='#1667cf' stroke-width='1.2'/><circle cx='1411.5' cy='700' r='3.6' fill='none' stroke='#fff' stroke-width='1.3'/><path d='M1412.6 701L1408.6 705.6' stroke='#fff' stroke-width='1.8' stroke-linecap='round'/><path d='M1412.6 701L1408.6 705.6' stroke='#2a7fe0' stroke-width='.5'/><circle cx='1430.4' cy='701.4' r='7' fill='#e4e4e4' stroke='#c2c2c2' stroke-width='.9'/><circle cx='1430.4' cy='701.4' r='3.2' fill='#efefef'/><circle cx='1430.4' cy='701.4' r='1.3' fill='#d8d8d8' stroke='#aaa' stroke-width='.6'/><path d='M1442.6 696.6H1445L1448.8 694V705L1445 702.6H1442.6Z' fill='#2c7fe4' stroke='#1a5fc4' stroke-width='.7'/><path d='M1449 696C1452 697 1452.6 701 1449.6 703.4' fill='#5aa8f5'/><rect x='1451.4' y='697.4' width='4.6' height='8.4' rx='2.2' fill='#c9c9c9' stroke='#9c9c9c' stroke-width='.7'/><path d='M1451.6 700H1456M1451.6 702H1456M1451.6 704H1456' stroke='#8e8e8e' stroke-width='.6'/><path d='M1453.7 706V709M1450.6 709.4H1456.8' stroke='#9c9c9c' stroke-width='1'/><rect x='1466.6' y='694.6' width='9' height='8' fill='#fff' stroke='#3c3c3c' stroke-width='.9'/><rect x='1468.0' y='696.0' width='6.2' height='4.4' fill='#2b7df0'/><rect x='1461.5' y='700' width='8.4' height='8.2' fill='#fff' stroke='#3c3c3c' stroke-width='.9'/><rect x='1462.9' y='701.4' width='5.6000000000000005' height='4.6' fill='#2b7df0'/><g transform='rotate(-44 1488 702)'><rect x='1479.5' y='698.2' width='12.5' height='7.6' rx='3.6' fill='url(#vb1)' stroke='#1a62c8' stroke-width='.9'/><rect x='1492' y='698.8' width='5.4' height='6.4' fill='#fff' stroke='#222' stroke-width='.9'/><rect x='1494' y='700' width='1.5' height='1.4' fill='#222'/><rect x='1494' y='702.8' width='1.5' height='1.4' fill='#222'/><path d='M1478.4 701.2V702.8' stroke='#1a62c8' stroke-width='1.6'/></g><path d='M1499.4 697.4V696.4Q1499.4 695.6 1500.2 695.6H1505L1506 697.4Z' fill='#d0d0d0' stroke='#a8a8a8' stroke-width='.6'/><rect x='1499.4' y='697.2' width='14.2' height='10.4' rx='.8' fill='url(#vbf)' stroke='#a4a4a4' stroke-width='.7'/><path d='M1500 698.2H1513' stroke='#efefef' stroke-width='.8'/><rect x='1518.5' y='694.6' width='14.2' height='12' fill='url(#vb2)' stroke='#7cbcf8' stroke-width='.9'/><rect x='1520.6' y='707' width='10' height='1.7' fill='#fff' stroke='#555' stroke-width='.6'/><rect x='1537.5' y='698.6' width='11' height='9.2' fill='#fff' stroke='#444' stroke-width='.9'/><rect x='1539' y='700' width='8' height='6' fill='#2470ea'/><rect x='1541' y='694.4' width='10.6' height='6.6' rx='1' fill='#6f8cf5' stroke='#3b4fd0' stroke-width='.9'/><rect x='1540.6' y='695.6' width='1.2' height='3.6' fill='#fff'/><rect x='1556.6' y='694.6' width='14' height='14' rx='1' fill='#5579ea' stroke='#3350c8' stroke-width='1.4' stroke-dasharray='1.1 .9'/><rect x='1558.4' y='696.4' width='10.4' height='10.4' fill='#86a6f6'/><path d='M1561.4 698.4V703.4L1563.6 706L1565.8 703.4V698.4' stroke='#fff' stroke-width='1.7' fill='none'/><circle cx='1582.8' cy='701.4' r='7' fill='url(#vbg)' stroke='#1c62c4' stroke-width='1'/><path d='M1577.6 697.4L1584 703.6M1586 695.4L1581 701.4' stroke='#1c62c4' stroke-width='1.1'/><path d='M1579 696L1587 696.5L1589.4 701L1583.4 703.4Z' fill='#2f84e6' opacity='.75'/><path d='M1584.6 697.6L1590.6 702.8L1584.8 709.6L1582.2 707.2L1585.6 703.2L1582.2 700Z' fill='#6bbf1a' stroke='#2f7a06' stroke-width='.9' stroke-linejoin='round'/><rect x='1594.8' y='694.6' width='13.6' height='13.8' rx='1.8' fill='#f4f8fe' stroke='#2468d2' stroke-width='1.5'/><rect x='1597' y='697' width='9.2' height='5' fill='#b8d2f6'/><path d='M1600 696.8H1603.4V700.6H1606L1601.7 705.6L1597.4 700.6H1600Z' fill='#1c1c1c'/></svg>
<span class=t style="left:62.0px;top:5px;font-size:14.5px;letter-spacing:0.249px;font-weight:700;color:#8f8d87;text-shadow:0 -1px 0 rgba(0,0,0,.55);">DVWA ve WebGoat (Ubuntu 14.04 LTS) [Running] - Oracle VM VirtualBox</span>
<span class=t style="left:9.8px;top:31px;font-size:14.5px;letter-spacing:0.379px;color:#1a1a1a;">File</span>
<span class=t style="left:49.3px;top:31px;font-size:14.5px;letter-spacing:0.367px;color:#1a1a1a;">Machine</span>
<span class=t style="left:120.9px;top:31px;font-size:14.5px;letter-spacing:0.837px;color:#1a1a1a;">View</span>
<span class=t style="left:169.0px;top:31px;font-size:14.5px;letter-spacing:0.944px;color:#1a1a1a;">Input</span>
<span class=t style="left:221.0px;top:31px;font-size:14.5px;letter-spacing:0.065px;color:#1a1a1a;">Devices</span>
<span class=t style="left:287.0px;top:31px;font-size:14.5px;letter-spacing:0.763px;color:#1a1a1a;">Help</span>
<span class=t style="left:551.0px;top:533px;font-size:14.5px;letter-spacing:0.343px;color:#1a1a1a;">Right Ctrl</span>
</div>
</body></html>
